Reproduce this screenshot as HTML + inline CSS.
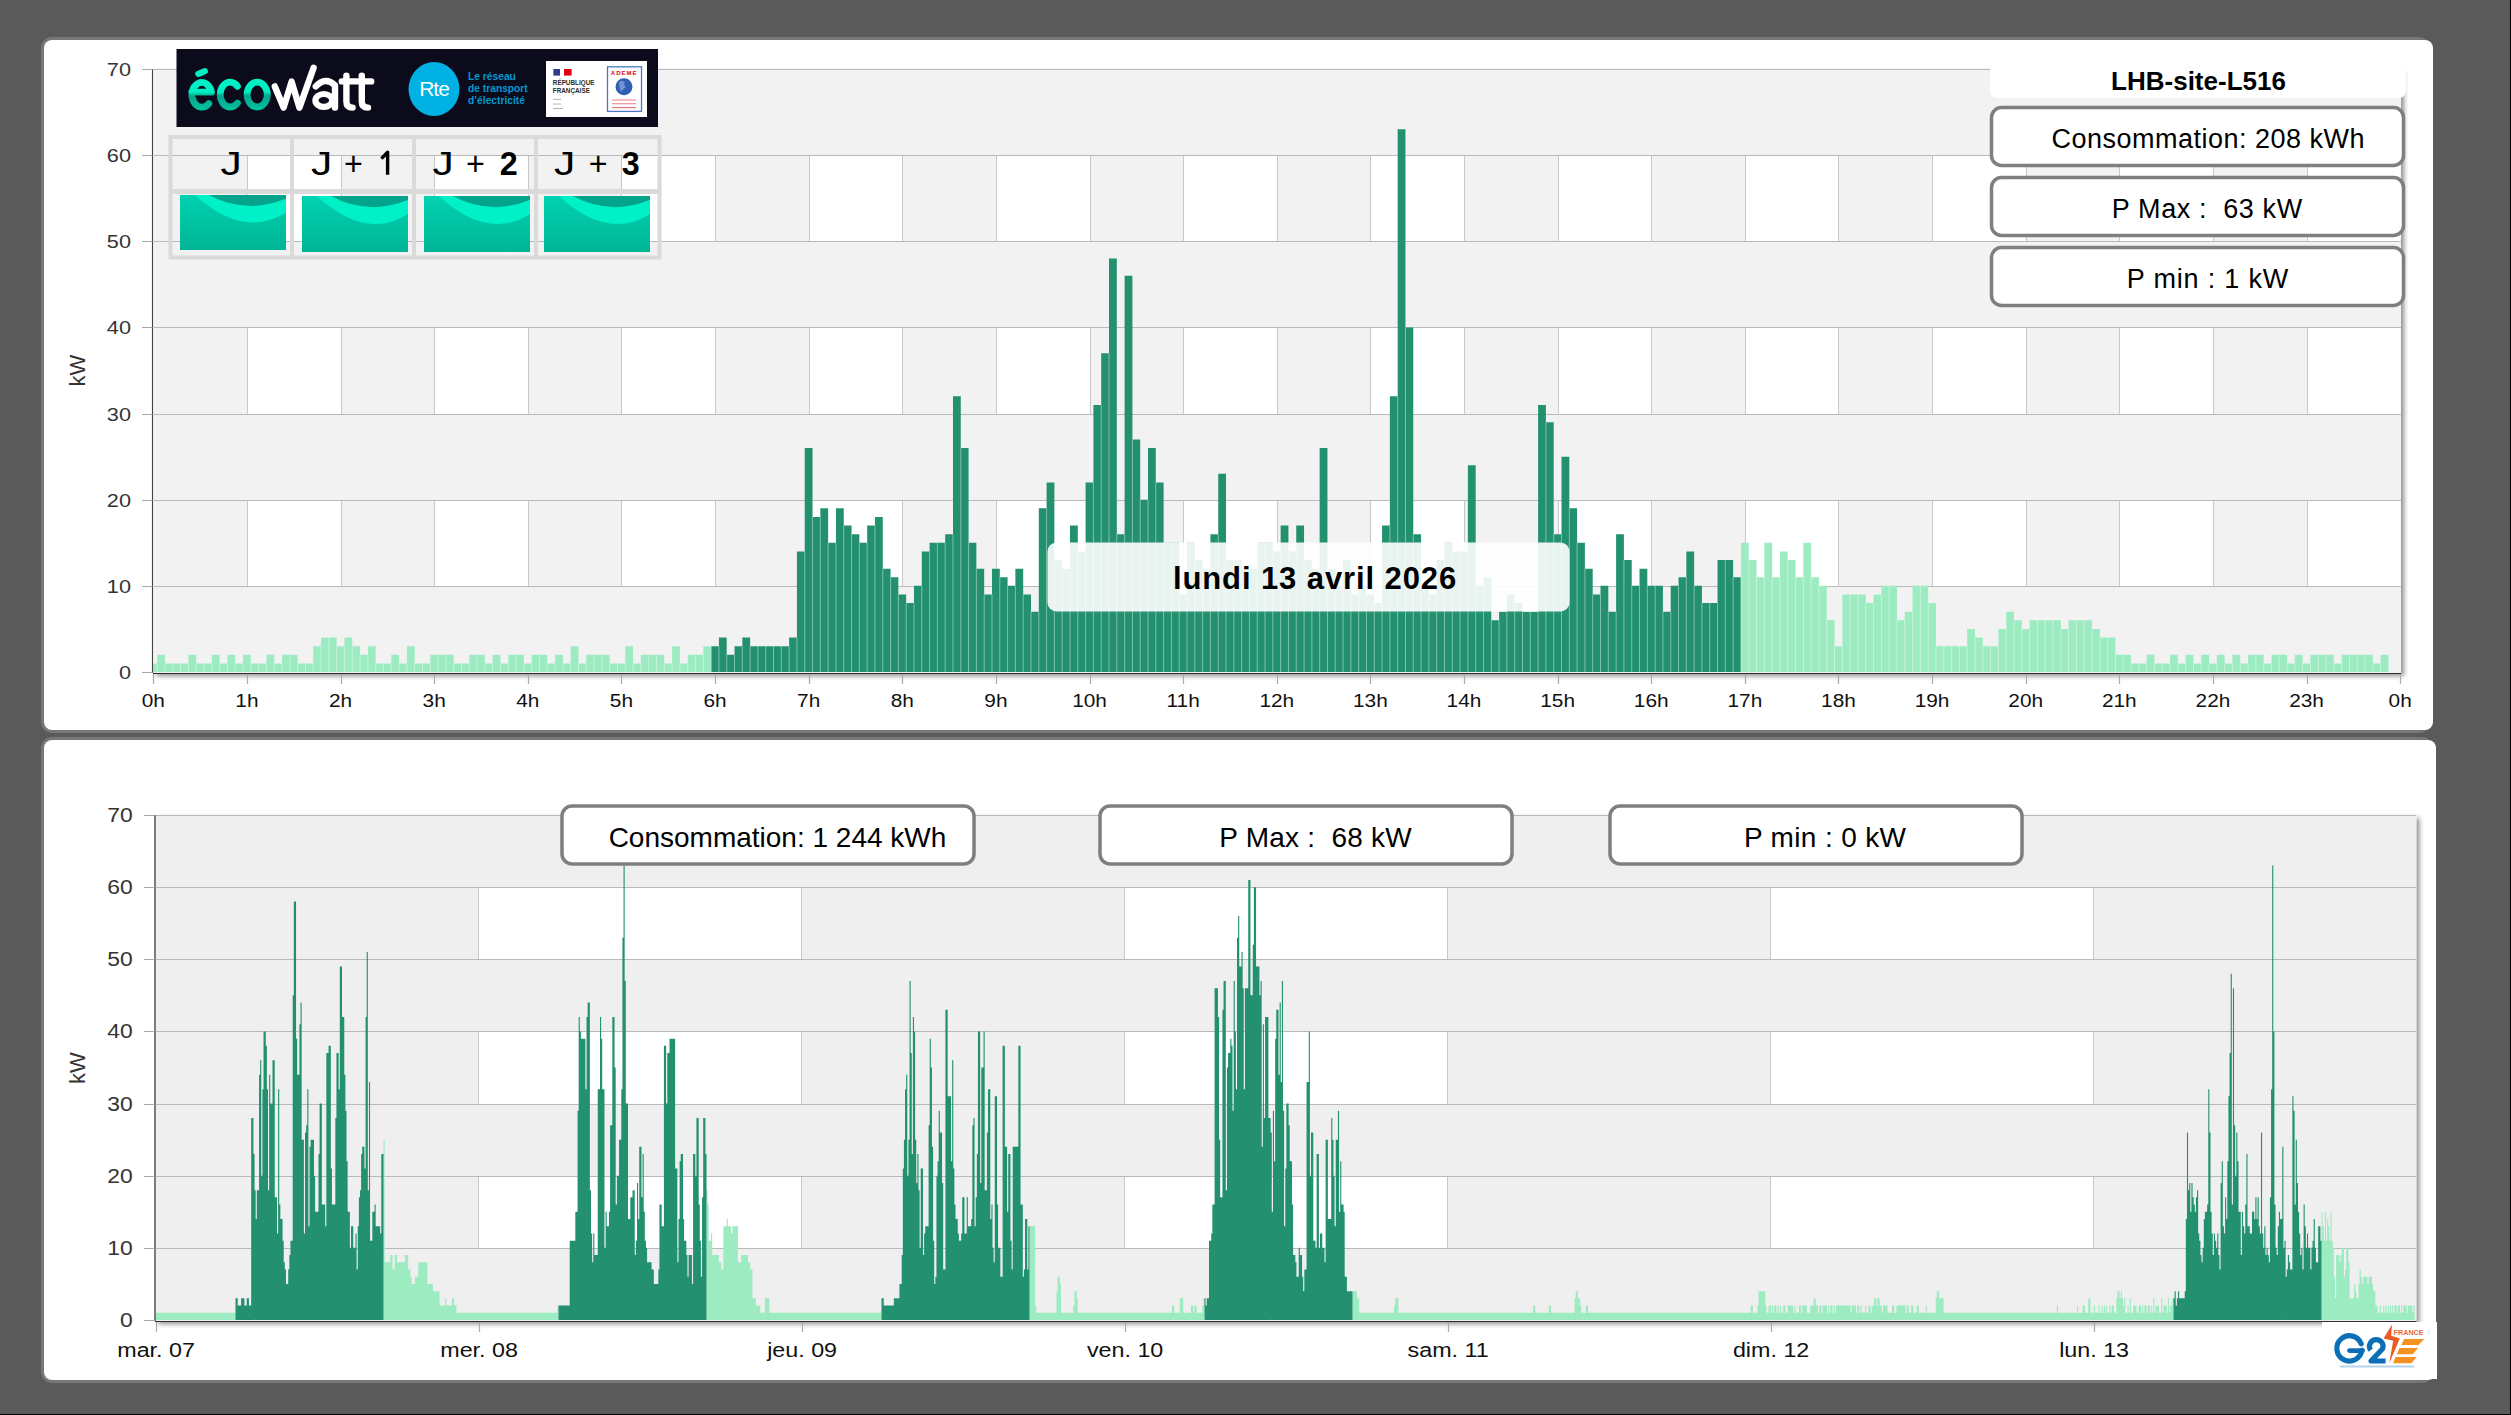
<!DOCTYPE html><html><head><meta charset="utf-8"><style>
html,body{margin:0;padding:0;background:#5a5a5a;width:2511px;height:1415px;overflow:hidden}
svg{position:absolute;left:0;top:0;display:block}
text{font-family:"Liberation Sans",sans-serif}
</style></head><body>
<svg width="2511" height="1415" viewBox="0 0 2511 1415">
<defs><filter id="psh" x="-5%" y="-5%" width="110%" height="110%"><feGaussianBlur in="SourceAlpha" stdDeviation="2.5"/><feOffset dx="3" dy="3"/><feComponentTransfer><feFuncA type="linear" slope="0.45"/></feComponentTransfer><feMerge><feMergeNode/><feMergeNode in="SourceGraphic"/></feMerge></filter><linearGradient id="tealg" x1="0" y1="0" x2="0" y2="1"><stop offset="0" stop-color="#00d2b0"/><stop offset="1" stop-color="#00b595"/></linearGradient></defs>
<rect x="2510" y="0" width="1" height="1415" fill="#000"/>
<rect x="0" y="1414" width="2511" height="1" fill="#000"/>
<rect x="42.5" y="38.5" width="2386" height="693" rx="9.5" ry="9.5" fill="none" stroke="#777" stroke-width="3"/>
<rect x="42.5" y="738.5" width="2389" height="643" rx="9.5" ry="9.5" fill="none" stroke="#777" stroke-width="3"/>
<rect x="44" y="40" width="2389" height="690" rx="8" ry="8" fill="#fff"/>
<rect x="44" y="740" width="2392" height="640" rx="8" ry="8" fill="#fff"/>
<rect x="153.3" y="69" width="2247.7" height="604" fill="#f2f2f2" filter="url(#psh)"/>
<rect x="247.5" y="155.5" width="94" height="86" fill="#fff"/>
<rect x="434.5" y="155.5" width="94" height="86" fill="#fff"/>
<rect x="621.5" y="155.5" width="94" height="86" fill="#fff"/>
<rect x="809.5" y="155.5" width="93" height="86" fill="#fff"/>
<rect x="996.5" y="155.5" width="94" height="86" fill="#fff"/>
<rect x="1183.5" y="155.5" width="94" height="86" fill="#fff"/>
<rect x="1370.5" y="155.5" width="94" height="86" fill="#fff"/>
<rect x="1558.5" y="155.5" width="93" height="86" fill="#fff"/>
<rect x="1745.5" y="155.5" width="93" height="86" fill="#fff"/>
<rect x="1932.5" y="155.5" width="94" height="86" fill="#fff"/>
<rect x="2119.5" y="155.5" width="94" height="86" fill="#fff"/>
<rect x="2307.5" y="155.5" width="93" height="86" fill="#fff"/>
<rect x="247.5" y="327.5" width="94" height="87" fill="#fff"/>
<rect x="434.5" y="327.5" width="94" height="87" fill="#fff"/>
<rect x="621.5" y="327.5" width="94" height="87" fill="#fff"/>
<rect x="809.5" y="327.5" width="93" height="87" fill="#fff"/>
<rect x="996.5" y="327.5" width="94" height="87" fill="#fff"/>
<rect x="1183.5" y="327.5" width="94" height="87" fill="#fff"/>
<rect x="1370.5" y="327.5" width="94" height="87" fill="#fff"/>
<rect x="1558.5" y="327.5" width="93" height="87" fill="#fff"/>
<rect x="1745.5" y="327.5" width="93" height="87" fill="#fff"/>
<rect x="1932.5" y="327.5" width="94" height="87" fill="#fff"/>
<rect x="2119.5" y="327.5" width="94" height="87" fill="#fff"/>
<rect x="2307.5" y="327.5" width="93" height="87" fill="#fff"/>
<rect x="247.5" y="500.5" width="94" height="86" fill="#fff"/>
<rect x="434.5" y="500.5" width="94" height="86" fill="#fff"/>
<rect x="621.5" y="500.5" width="94" height="86" fill="#fff"/>
<rect x="809.5" y="500.5" width="93" height="86" fill="#fff"/>
<rect x="996.5" y="500.5" width="94" height="86" fill="#fff"/>
<rect x="1183.5" y="500.5" width="94" height="86" fill="#fff"/>
<rect x="1370.5" y="500.5" width="94" height="86" fill="#fff"/>
<rect x="1558.5" y="500.5" width="93" height="86" fill="#fff"/>
<rect x="1745.5" y="500.5" width="93" height="86" fill="#fff"/>
<rect x="1932.5" y="500.5" width="94" height="86" fill="#fff"/>
<rect x="2119.5" y="500.5" width="94" height="86" fill="#fff"/>
<rect x="2307.5" y="500.5" width="93" height="86" fill="#fff"/>
<path d="M153.3 586.5H2401M153.3 500.5H2401M153.3 414.5H2401M153.3 327.5H2401M153.3 241.5H2401M153.3 155.5H2401M153.3 69.5H2401" stroke="#b9b9b9" stroke-width="1" fill="none"/>
<path d="M247.5 156V241M341.5 156V241M434.5 156V241M528.5 156V241M621.5 156V241M715.5 156V241M809.5 156V241M902.5 156V241M996.5 156V241M1090.5 156V241M1183.5 156V241M1277.5 156V241M1370.5 156V241M1464.5 156V241M1558.5 156V241M1651.5 156V241M1745.5 156V241M1838.5 156V241M1932.5 156V241M2026.5 156V241M2119.5 156V241M2213.5 156V241M2307.5 156V241M247.5 328V414M341.5 328V414M434.5 328V414M528.5 328V414M621.5 328V414M715.5 328V414M809.5 328V414M902.5 328V414M996.5 328V414M1090.5 328V414M1183.5 328V414M1277.5 328V414M1370.5 328V414M1464.5 328V414M1558.5 328V414M1651.5 328V414M1745.5 328V414M1838.5 328V414M1932.5 328V414M2026.5 328V414M2119.5 328V414M2213.5 328V414M2307.5 328V414M247.5 501V586M341.5 501V586M434.5 501V586M528.5 501V586M621.5 501V586M715.5 501V586M809.5 501V586M902.5 501V586M996.5 501V586M1090.5 501V586M1183.5 501V586M1277.5 501V586M1370.5 501V586M1464.5 501V586M1558.5 501V586M1651.5 501V586M1745.5 501V586M1838.5 501V586M1932.5 501V586M2026.5 501V586M2119.5 501V586M2213.5 501V586M2307.5 501V586" stroke="#c8c8c8" stroke-width="1" fill="none"/>
<path d="M153.3 663.39H157.2V672H153.3ZM157.2 654.77H165V672H157.2ZM165 663.39H172.8V672H165ZM172.8 663.39H180.61V672H172.8ZM180.61 663.39H188.41V672H180.61ZM188.41 654.77H196.21V672H188.41ZM196.21 663.39H204.01V672H196.21ZM204.01 663.39H211.81V672H204.01ZM211.81 654.77H219.61V672H211.81ZM219.61 663.39H227.42V672H219.61ZM227.42 654.77H235.22V672H227.42ZM235.22 663.39H243.02V672H235.22ZM243.02 654.77H250.82V672H243.02ZM250.82 663.39H258.62V672H250.82ZM258.62 663.39H266.42V672H258.62ZM266.42 654.77H274.23V672H266.42ZM274.23 663.39H282.03V672H274.23ZM282.03 654.77H289.83V672H282.03ZM289.83 654.77H297.63V672H289.83ZM297.63 663.39H305.43V672H297.63ZM305.43 663.39H313.23V672H305.43ZM313.23 646.16H321.04V672H313.23ZM321.04 637.54H328.84V672H321.04ZM328.84 637.54H336.64V672H328.84ZM336.64 646.16H344.44V672H336.64ZM344.44 637.54H352.24V672H344.44ZM352.24 646.16H360.04V672H352.24ZM360.04 654.77H367.85V672H360.04ZM367.85 646.16H375.65V672H367.85ZM375.65 663.39H383.45V672H375.65ZM383.45 663.39H391.25V672H383.45ZM391.25 654.77H399.05V672H391.25ZM399.05 663.39H406.85V672H399.05ZM406.85 646.16H414.66V672H406.85ZM414.66 663.39H422.46V672H414.66ZM422.46 663.39H430.26V672H422.46ZM430.26 654.77H438.06V672H430.26ZM438.06 654.77H445.86V672H438.06ZM445.86 654.77H453.66V672H445.86ZM453.66 663.39H461.47V672H453.66ZM461.47 663.39H469.27V672H461.47ZM469.27 654.77H477.07V672H469.27ZM477.07 654.77H484.87V672H477.07ZM484.87 663.39H492.67V672H484.87ZM492.67 654.77H500.47V672H492.67ZM500.47 663.39H508.28V672H500.47ZM508.28 654.77H516.08V672H508.28ZM516.08 654.77H523.88V672H516.08ZM523.88 663.39H531.68V672H523.88ZM531.68 654.77H539.48V672H531.68ZM539.48 654.77H547.28V672H539.48ZM547.28 663.39H555.09V672H547.28ZM555.09 654.77H562.89V672H555.09ZM562.89 663.39H570.69V672H562.89ZM570.69 646.16H578.49V672H570.69ZM578.49 663.39H586.29V672H578.49ZM586.29 654.77H594.09V672H586.29ZM594.09 654.77H601.9V672H594.09ZM601.9 654.77H609.7V672H601.9ZM609.7 663.39H617.5V672H609.7ZM617.5 663.39H625.3V672H617.5ZM625.3 646.16H633.1V672H625.3ZM633.1 663.39H640.9V672H633.1ZM640.9 654.77H648.71V672H640.9ZM648.71 654.77H656.51V672H648.71ZM656.51 654.77H664.31V672H656.51ZM664.31 663.39H672.11V672H664.31ZM672.11 646.16H679.91V672H672.11ZM679.91 663.39H687.71V672H679.91ZM687.71 654.77H695.52V672H687.71ZM695.52 654.77H703.32V672H695.52ZM703.32 646.16H711.12V672H703.32ZM1740.94 542.79H1748.74V672H1740.94ZM1748.74 560.01H1756.54V672H1748.74ZM1756.54 577.24H1764.34V672H1756.54ZM1764.34 542.79H1772.15V672H1764.34ZM1772.15 577.24H1779.95V672H1772.15ZM1779.95 551.4H1787.75V672H1779.95ZM1787.75 560.01H1795.55V672H1787.75ZM1795.55 577.24H1803.35V672H1795.55ZM1803.35 542.79H1811.15V672H1803.35ZM1811.15 577.24H1818.96V672H1811.15ZM1818.96 585.86H1826.76V672H1818.96ZM1826.76 620.31H1834.56V672H1826.76ZM1834.56 646.16H1842.36V672H1834.56ZM1842.36 594.47H1850.16V672H1842.36ZM1850.16 594.47H1857.96V672H1850.16ZM1857.96 594.47H1865.77V672H1857.96ZM1865.77 603.09H1873.57V672H1865.77ZM1873.57 594.47H1881.37V672H1873.57ZM1881.37 585.86H1889.17V672H1881.37ZM1889.17 585.86H1896.97V672H1889.17ZM1896.97 620.31H1904.77V672H1896.97ZM1904.77 611.7H1912.58V672H1904.77ZM1912.58 585.86H1920.38V672H1912.58ZM1920.38 585.86H1928.18V672H1920.38ZM1928.18 603.09H1935.98V672H1928.18ZM1935.98 646.16H1943.78V672H1935.98ZM1943.78 646.16H1951.58V672H1943.78ZM1951.58 646.16H1959.39V672H1951.58ZM1959.39 646.16H1967.19V672H1959.39ZM1967.19 628.93H1974.99V672H1967.19ZM1974.99 637.54H1982.79V672H1974.99ZM1982.79 646.16H1990.59V672H1982.79ZM1990.59 646.16H1998.39V672H1990.59ZM1998.39 628.93H2006.2V672H1998.39ZM2006.2 611.7H2014V672H2006.2ZM2014 620.31H2021.8V672H2014ZM2021.8 628.93H2029.6V672H2021.8ZM2029.6 620.31H2037.4V672H2029.6ZM2037.4 620.31H2045.2V672H2037.4ZM2045.2 620.31H2053.01V672H2045.2ZM2053.01 620.31H2060.81V672H2053.01ZM2060.81 628.93H2068.61V672H2060.81ZM2068.61 620.31H2076.41V672H2068.61ZM2076.41 620.31H2084.21V672H2076.41ZM2084.21 620.31H2092.01V672H2084.21ZM2092.01 628.93H2099.82V672H2092.01ZM2099.82 637.54H2107.62V672H2099.82ZM2107.62 637.54H2115.42V672H2107.62ZM2115.42 654.77H2123.22V672H2115.42ZM2123.22 654.77H2131.02V672H2123.22ZM2131.02 663.39H2138.82V672H2131.02ZM2138.82 663.39H2146.63V672H2138.82ZM2146.63 654.77H2154.43V672H2146.63ZM2154.43 663.39H2162.23V672H2154.43ZM2162.23 663.39H2170.03V672H2162.23ZM2170.03 654.77H2177.83V672H2170.03ZM2177.83 663.39H2185.63V672H2177.83ZM2185.63 654.77H2193.44V672H2185.63ZM2193.44 663.39H2201.24V672H2193.44ZM2201.24 654.77H2209.04V672H2201.24ZM2209.04 663.39H2216.84V672H2209.04ZM2216.84 654.77H2224.64V672H2216.84ZM2224.64 663.39H2232.44V672H2224.64ZM2232.44 654.77H2240.25V672H2232.44ZM2240.25 663.39H2248.05V672H2240.25ZM2248.05 654.77H2255.85V672H2248.05ZM2255.85 654.77H2263.65V672H2255.85ZM2263.65 663.39H2271.45V672H2263.65ZM2271.45 654.77H2279.25V672H2271.45ZM2279.25 654.77H2287.06V672H2279.25ZM2287.06 663.39H2294.86V672H2287.06ZM2294.86 654.77H2302.66V672H2294.86ZM2302.66 663.39H2310.46V672H2302.66ZM2310.46 654.77H2318.26V672H2310.46ZM2318.26 654.77H2326.06V672H2318.26ZM2326.06 654.77H2333.87V672H2326.06ZM2333.87 663.39H2341.67V672H2333.87ZM2341.67 654.77H2349.47V672H2341.67ZM2349.47 654.77H2357.27V672H2349.47ZM2357.27 654.77H2365.07V672H2357.27ZM2365.07 654.77H2372.87V672H2365.07ZM2372.87 663.39H2380.68V672H2372.87ZM2380.68 654.77H2388.48V672H2380.68Z" fill="#9debc1"/>
<path d="M711.12 646.16H718.92V672H711.12ZM718.92 637.54H726.72V672H718.92ZM726.72 654.77H734.52V672H726.72ZM734.52 646.16H742.33V672H734.52ZM742.33 637.54H750.13V672H742.33ZM750.13 646.16H757.93V672H750.13ZM757.93 646.16H765.73V672H757.93ZM765.73 646.16H773.53V672H765.73ZM773.53 646.16H781.33V672H773.53ZM781.33 646.16H789.14V672H781.33ZM789.14 637.54H796.94V672H789.14ZM796.94 551.4H804.74V672H796.94ZM804.74 448.03H812.54V672H804.74ZM812.54 516.94H820.34V672H812.54ZM820.34 508.33H828.14V672H820.34ZM828.14 542.79H835.95V672H828.14ZM835.95 508.33H843.75V672H835.95ZM843.75 525.56H851.55V672H843.75ZM851.55 534.17H859.35V672H851.55ZM859.35 542.79H867.15V672H859.35ZM867.15 525.56H874.95V672H867.15ZM874.95 516.94H882.76V672H874.95ZM882.76 568.63H890.56V672H882.76ZM890.56 577.24H898.36V672H890.56ZM898.36 594.47H906.16V672H898.36ZM906.16 603.09H913.96V672H906.16ZM913.96 585.86H921.76V672H913.96ZM921.76 551.4H929.57V672H921.76ZM929.57 542.79H937.37V672H929.57ZM937.37 542.79H945.17V672H937.37ZM945.17 534.17H952.97V672H945.17ZM952.97 396.34H960.77V672H952.97ZM960.77 448.03H968.57V672H960.77ZM968.57 542.79H976.38V672H968.57ZM976.38 568.63H984.18V672H976.38ZM984.18 594.47H991.98V672H984.18ZM991.98 568.63H999.78V672H991.98ZM999.78 577.24H1007.58V672H999.78ZM1007.58 585.86H1015.38V672H1007.58ZM1015.38 568.63H1023.19V672H1015.38ZM1023.19 594.47H1030.99V672H1023.19ZM1030.99 611.7H1038.79V672H1030.99ZM1038.79 508.33H1046.59V672H1038.79ZM1046.59 482.49H1054.39V672H1046.59ZM1054.39 560.01H1062.19V672H1054.39ZM1062.19 568.63H1070V672H1062.19ZM1070 525.56H1077.8V672H1070ZM1077.8 551.4H1085.6V672H1077.8ZM1085.6 482.49H1093.4V672H1085.6ZM1093.4 404.96H1101.2V672H1093.4ZM1101.2 353.27H1109V672H1101.2ZM1109 258.51H1116.81V672H1109ZM1116.81 534.17H1124.61V672H1116.81ZM1124.61 275.74H1132.41V672H1124.61ZM1132.41 439.41H1140.21V672H1132.41ZM1140.21 499.71H1148.01V672H1140.21ZM1148.01 448.03H1155.81V672H1148.01ZM1155.81 482.49H1163.62V672H1155.81ZM1163.62 542.79H1171.42V672H1163.62ZM1171.42 542.79H1179.22V672H1171.42ZM1179.22 594.47H1187.02V672H1179.22ZM1187.02 542.79H1194.82V672H1187.02ZM1194.82 560.01H1202.62V672H1194.82ZM1202.62 568.63H1210.43V672H1202.62ZM1210.43 534.17H1218.23V672H1210.43ZM1218.23 473.87H1226.03V672H1218.23ZM1226.03 560.01H1233.83V672H1226.03ZM1233.83 560.01H1241.63V672H1233.83ZM1241.63 568.63H1249.43V672H1241.63ZM1249.43 568.63H1257.24V672H1249.43ZM1257.24 542.79H1265.04V672H1257.24ZM1265.04 542.79H1272.84V672H1265.04ZM1272.84 551.4H1280.64V672H1272.84ZM1280.64 525.56H1288.44V672H1280.64ZM1288.44 551.4H1296.24V672H1288.44ZM1296.24 525.56H1304.05V672H1296.24ZM1304.05 560.01H1311.85V672H1304.05ZM1311.85 568.63H1319.65V672H1311.85ZM1319.65 448.03H1327.45V672H1319.65ZM1327.45 568.63H1335.25V672H1327.45ZM1335.25 585.86H1343.05V672H1335.25ZM1343.05 560.01H1350.86V672H1343.05ZM1350.86 594.47H1358.66V672H1350.86ZM1358.66 585.86H1366.46V672H1358.66ZM1366.46 594.47H1374.26V672H1366.46ZM1374.26 603.09H1382.06V672H1374.26ZM1382.06 525.56H1389.86V672H1382.06ZM1389.86 396.34H1397.67V672H1389.86ZM1397.67 129.3H1405.47V672H1397.67ZM1405.47 327.43H1413.27V672H1405.47ZM1413.27 534.17H1421.07V672H1413.27ZM1421.07 585.86H1428.87V672H1421.07ZM1428.87 594.47H1436.67V672H1428.87ZM1436.67 560.01H1444.48V672H1436.67ZM1444.48 542.79H1452.28V672H1444.48ZM1452.28 551.4H1460.08V672H1452.28ZM1460.08 551.4H1467.88V672H1460.08ZM1467.88 465.26H1475.68V672H1467.88ZM1475.68 585.86H1483.48V672H1475.68ZM1483.48 577.24H1491.29V672H1483.48ZM1491.29 620.31H1499.09V672H1491.29ZM1499.09 611.7H1506.89V672H1499.09ZM1506.89 594.47H1514.69V672H1506.89ZM1514.69 603.09H1522.49V672H1514.69ZM1522.49 611.7H1530.29V672H1522.49ZM1530.29 611.7H1538.1V672H1530.29ZM1538.1 404.96H1545.9V672H1538.1ZM1545.9 422.19H1553.7V672H1545.9ZM1553.7 534.17H1561.5V672H1553.7ZM1561.5 456.64H1569.3V672H1561.5ZM1569.3 508.33H1577.1V672H1569.3ZM1577.1 542.79H1584.91V672H1577.1ZM1584.91 568.63H1592.71V672H1584.91ZM1592.71 594.47H1600.51V672H1592.71ZM1600.51 585.86H1608.31V672H1600.51ZM1608.31 611.7H1616.11V672H1608.31ZM1616.11 534.17H1623.91V672H1616.11ZM1623.91 560.01H1631.72V672H1623.91ZM1631.72 585.86H1639.52V672H1631.72ZM1639.52 568.63H1647.32V672H1639.52ZM1647.32 585.86H1655.12V672H1647.32ZM1655.12 585.86H1662.92V672H1655.12ZM1662.92 611.7H1670.72V672H1662.92ZM1670.72 585.86H1678.53V672H1670.72ZM1678.53 577.24H1686.33V672H1678.53ZM1686.33 551.4H1694.13V672H1686.33ZM1694.13 585.86H1701.93V672H1694.13ZM1701.93 603.09H1709.73V672H1701.93ZM1709.73 603.09H1717.53V672H1709.73ZM1717.53 560.01H1725.34V672H1717.53ZM1725.34 560.01H1733.14V672H1725.34ZM1733.14 577.24H1740.94V672H1733.14Z" fill="#23916f"/>
<path d="M157.2 663.39V672M165 663.39V672M172.8 663.39V672M180.61 663.39V672M188.41 663.39V672M196.21 663.39V672M204.01 663.39V672M211.81 663.39V672M219.61 663.39V672M227.42 663.39V672M235.22 663.39V672M243.02 663.39V672M250.82 663.39V672M258.62 663.39V672M266.42 663.39V672M274.23 663.39V672M282.03 663.39V672M289.83 654.77V672M297.63 663.39V672M305.43 663.39V672M313.23 663.39V672M321.04 646.16V672M328.84 637.54V672M336.64 646.16V672M344.44 646.16V672M352.24 646.16V672M360.04 654.77V672M367.85 654.77V672M375.65 663.39V672M383.45 663.39V672M391.25 663.39V672M399.05 663.39V672M406.85 663.39V672M414.66 663.39V672M422.46 663.39V672M430.26 663.39V672M438.06 654.77V672M445.86 654.77V672M453.66 663.39V672M461.47 663.39V672M469.27 663.39V672M477.07 654.77V672M484.87 663.39V672M492.67 663.39V672M500.47 663.39V672M508.28 663.39V672M516.08 654.77V672M523.88 663.39V672M531.68 663.39V672M539.48 654.77V672M547.28 663.39V672M555.09 663.39V672M562.89 663.39V672M570.69 663.39V672M578.49 663.39V672M586.29 663.39V672M594.09 654.77V672M601.9 654.77V672M609.7 663.39V672M617.5 663.39V672M625.3 663.39V672M633.1 663.39V672M640.9 663.39V672M648.71 654.77V672M656.51 654.77V672M664.31 663.39V672M672.11 663.39V672M679.91 663.39V672M687.71 663.39V672M695.52 654.77V672M703.32 654.77V672M711.12 646.16V672M718.92 646.16V672M726.72 654.77V672M734.52 654.77V672M742.33 646.16V672M750.13 646.16V672M757.93 646.16V672M765.73 646.16V672M773.53 646.16V672M781.33 646.16V672M789.14 646.16V672M796.94 637.54V672M804.74 551.4V672M812.54 516.94V672M820.34 516.94V672M828.14 542.79V672M835.95 542.79V672M843.75 525.56V672M851.55 534.17V672M859.35 542.79V672M867.15 542.79V672M874.95 525.56V672M882.76 568.63V672M890.56 577.24V672M898.36 594.47V672M906.16 603.09V672M913.96 603.09V672M921.76 585.86V672M929.57 551.4V672M937.37 542.79V672M945.17 542.79V672M952.97 534.17V672M960.77 448.03V672M968.57 542.79V672M976.38 568.63V672M984.18 594.47V672M991.98 594.47V672M999.78 577.24V672M1007.58 585.86V672M1015.38 585.86V672M1023.19 594.47V672M1030.99 611.7V672M1038.79 611.7V672M1046.59 508.33V672M1054.39 560.01V672M1062.19 568.63V672M1070 568.63V672M1077.8 551.4V672M1085.6 551.4V672M1093.4 482.49V672M1101.2 404.96V672M1109 353.27V672M1116.81 534.17V672M1124.61 534.17V672M1132.41 439.41V672M1140.21 499.71V672M1148.01 499.71V672M1155.81 482.49V672M1163.62 542.79V672M1171.42 542.79V672M1179.22 594.47V672M1187.02 594.47V672M1194.82 560.01V672M1202.62 568.63V672M1210.43 568.63V672M1218.23 534.17V672M1226.03 560.01V672M1233.83 560.01V672M1241.63 568.63V672M1249.43 568.63V672M1257.24 568.63V672M1265.04 542.79V672M1272.84 551.4V672M1280.64 551.4V672M1288.44 551.4V672M1296.24 551.4V672M1304.05 560.01V672M1311.85 568.63V672M1319.65 568.63V672M1327.45 568.63V672M1335.25 585.86V672M1343.05 585.86V672M1350.86 594.47V672M1358.66 594.47V672M1366.46 594.47V672M1374.26 603.09V672M1382.06 603.09V672M1389.86 525.56V672M1397.67 396.34V672M1405.47 327.43V672M1413.27 534.17V672M1421.07 585.86V672M1428.87 594.47V672M1436.67 594.47V672M1444.48 560.01V672M1452.28 551.4V672M1460.08 551.4V672M1467.88 551.4V672M1475.68 585.86V672M1483.48 585.86V672M1491.29 620.31V672M1499.09 620.31V672M1506.89 611.7V672M1514.69 603.09V672M1522.49 611.7V672M1530.29 611.7V672M1538.1 611.7V672M1545.9 422.19V672M1553.7 534.17V672M1561.5 534.17V672M1569.3 508.33V672M1577.1 542.79V672M1584.91 568.63V672M1592.71 594.47V672M1600.51 594.47V672M1608.31 611.7V672M1616.11 611.7V672M1623.91 560.01V672M1631.72 585.86V672M1639.52 585.86V672M1647.32 585.86V672M1655.12 585.86V672M1662.92 611.7V672M1670.72 611.7V672M1678.53 585.86V672M1686.33 577.24V672M1694.13 585.86V672M1701.93 603.09V672M1709.73 603.09V672M1717.53 603.09V672M1725.34 560.01V672M1733.14 577.24V672M1740.94 577.24V672M1748.74 560.01V672M1756.54 577.24V672M1764.34 577.24V672M1772.15 577.24V672M1779.95 577.24V672M1787.75 560.01V672M1795.55 577.24V672M1803.35 577.24V672M1811.15 577.24V672M1818.96 585.86V672M1826.76 620.31V672M1834.56 646.16V672M1842.36 646.16V672M1850.16 594.47V672M1857.96 594.47V672M1865.77 603.09V672M1873.57 603.09V672M1881.37 594.47V672M1889.17 585.86V672M1896.97 620.31V672M1904.77 620.31V672M1912.58 611.7V672M1920.38 585.86V672M1928.18 603.09V672M1935.98 646.16V672M1943.78 646.16V672M1951.58 646.16V672M1959.39 646.16V672M1967.19 646.16V672M1974.99 637.54V672M1982.79 646.16V672M1990.59 646.16V672M1998.39 646.16V672M2006.2 628.93V672M2014 620.31V672M2021.8 628.93V672M2029.6 628.93V672M2037.4 620.31V672M2045.2 620.31V672M2053.01 620.31V672M2060.81 628.93V672M2068.61 628.93V672M2076.41 620.31V672M2084.21 620.31V672M2092.01 628.93V672M2099.82 637.54V672M2107.62 637.54V672M2115.42 654.77V672M2123.22 654.77V672M2131.02 663.39V672M2138.82 663.39V672M2146.63 663.39V672M2154.43 663.39V672M2162.23 663.39V672M2170.03 663.39V672M2177.83 663.39V672M2185.63 663.39V672M2193.44 663.39V672M2201.24 663.39V672M2209.04 663.39V672M2216.84 663.39V672M2224.64 663.39V672M2232.44 663.39V672M2240.25 663.39V672M2248.05 663.39V672M2255.85 654.77V672M2263.65 663.39V672M2271.45 663.39V672M2279.25 654.77V672M2287.06 663.39V672M2294.86 663.39V672M2302.66 663.39V672M2310.46 663.39V672M2318.26 654.77V672M2326.06 654.77V672M2333.87 663.39V672M2341.67 663.39V672M2349.47 654.77V672M2357.27 654.77V672M2365.07 654.77V672M2372.87 663.39V672M2380.68 663.39V672" stroke="#fff" stroke-opacity="0.42" stroke-width="1" fill="none"/>
<path d="M152.5 69V673" stroke="#444" stroke-width="1.1" fill="none"/>
<path d="M153 673.5H2401" stroke="#2e2e2e" stroke-width="1.2" fill="none"/>
<text transform="translate(131 678.8) scale(1.24 1)" font-size="17.5" fill="#333" text-anchor="end">0</text>
<text transform="translate(131 592.8) scale(1.24 1)" font-size="17.5" fill="#333" text-anchor="end">10</text>
<text transform="translate(131 506.8) scale(1.24 1)" font-size="17.5" fill="#333" text-anchor="end">20</text>
<text transform="translate(131 420.8) scale(1.24 1)" font-size="17.5" fill="#333" text-anchor="end">30</text>
<text transform="translate(131 333.8) scale(1.24 1)" font-size="17.5" fill="#333" text-anchor="end">40</text>
<text transform="translate(131 247.8) scale(1.24 1)" font-size="17.5" fill="#333" text-anchor="end">50</text>
<text transform="translate(131 161.8) scale(1.24 1)" font-size="17.5" fill="#333" text-anchor="end">60</text>
<text transform="translate(131 75.8) scale(1.24 1)" font-size="17.5" fill="#333" text-anchor="end">70</text>
<path d="M142 672.5H152.5M142 586.5H152.5M142 500.5H152.5M142 414.5H152.5M142 327.5H152.5M142 241.5H152.5M142 155.5H152.5M142 69.5H152.5" stroke="#a8a8a8" stroke-width="1" fill="none"/>
<text transform="translate(153.3 707) scale(1.19 1)" font-size="17.5" fill="#111" text-anchor="middle">0h</text>
<text transform="translate(246.92 707) scale(1.19 1)" font-size="17.5" fill="#111" text-anchor="middle">1h</text>
<text transform="translate(340.54 707) scale(1.19 1)" font-size="17.5" fill="#111" text-anchor="middle">2h</text>
<text transform="translate(434.16 707) scale(1.19 1)" font-size="17.5" fill="#111" text-anchor="middle">3h</text>
<text transform="translate(527.78 707) scale(1.19 1)" font-size="17.5" fill="#111" text-anchor="middle">4h</text>
<text transform="translate(621.4 707) scale(1.19 1)" font-size="17.5" fill="#111" text-anchor="middle">5h</text>
<text transform="translate(715.02 707) scale(1.19 1)" font-size="17.5" fill="#111" text-anchor="middle">6h</text>
<text transform="translate(808.64 707) scale(1.19 1)" font-size="17.5" fill="#111" text-anchor="middle">7h</text>
<text transform="translate(902.26 707) scale(1.19 1)" font-size="17.5" fill="#111" text-anchor="middle">8h</text>
<text transform="translate(995.88 707) scale(1.19 1)" font-size="17.5" fill="#111" text-anchor="middle">9h</text>
<text transform="translate(1089.5 707) scale(1.19 1)" font-size="17.5" fill="#111" text-anchor="middle">10h</text>
<text transform="translate(1183.12 707) scale(1.19 1)" font-size="17.5" fill="#111" text-anchor="middle">11h</text>
<text transform="translate(1276.74 707) scale(1.19 1)" font-size="17.5" fill="#111" text-anchor="middle">12h</text>
<text transform="translate(1370.36 707) scale(1.19 1)" font-size="17.5" fill="#111" text-anchor="middle">13h</text>
<text transform="translate(1463.98 707) scale(1.19 1)" font-size="17.5" fill="#111" text-anchor="middle">14h</text>
<text transform="translate(1557.6 707) scale(1.19 1)" font-size="17.5" fill="#111" text-anchor="middle">15h</text>
<text transform="translate(1651.22 707) scale(1.19 1)" font-size="17.5" fill="#111" text-anchor="middle">16h</text>
<text transform="translate(1744.84 707) scale(1.19 1)" font-size="17.5" fill="#111" text-anchor="middle">17h</text>
<text transform="translate(1838.46 707) scale(1.19 1)" font-size="17.5" fill="#111" text-anchor="middle">18h</text>
<text transform="translate(1932.08 707) scale(1.19 1)" font-size="17.5" fill="#111" text-anchor="middle">19h</text>
<text transform="translate(2025.7 707) scale(1.19 1)" font-size="17.5" fill="#111" text-anchor="middle">20h</text>
<text transform="translate(2119.32 707) scale(1.19 1)" font-size="17.5" fill="#111" text-anchor="middle">21h</text>
<text transform="translate(2212.94 707) scale(1.19 1)" font-size="17.5" fill="#111" text-anchor="middle">22h</text>
<text transform="translate(2306.56 707) scale(1.19 1)" font-size="17.5" fill="#111" text-anchor="middle">23h</text>
<text transform="translate(2400.18 707) scale(1.19 1)" font-size="17.5" fill="#111" text-anchor="middle">0h</text>
<path d="M153.5 674V684M247.5 674V684M341.5 674V684M434.5 674V684M528.5 674V684M621.5 674V684M715.5 674V684M809.5 674V684M902.5 674V684M996.5 674V684M1090.5 674V684M1183.5 674V684M1277.5 674V684M1370.5 674V684M1464.5 674V684M1558.5 674V684M1651.5 674V684M1745.5 674V684M1838.5 674V684M1932.5 674V684M2026.5 674V684M2119.5 674V684M2213.5 674V684M2307.5 674V684M2400.5 674V684" stroke="#aaa" stroke-width="1.2" fill="none"/>
<text transform="translate(85 370.5) rotate(-90)" font-size="22" fill="#333" text-anchor="middle">kW</text>
<rect x="1047.5" y="542.5" width="522" height="69" rx="9" ry="9" fill="#fff" fill-opacity="0.9"/>
<text x="1315" y="589" font-size="31" font-weight="bold" fill="#000" text-anchor="middle" letter-spacing="0.9">lundi 13 avril 2026</text>
<rect x="155.3" y="815" width="2261" height="506" fill="#efefef" filter="url(#psh)"/>
<rect x="478.5" y="887.5" width="323" height="72" fill="#fff"/>
<rect x="1124.5" y="887.5" width="323" height="72" fill="#fff"/>
<rect x="1770.5" y="887.5" width="323" height="72" fill="#fff"/>
<rect x="478.5" y="1031.5" width="323" height="73" fill="#fff"/>
<rect x="1124.5" y="1031.5" width="323" height="73" fill="#fff"/>
<rect x="1770.5" y="1031.5" width="323" height="73" fill="#fff"/>
<rect x="478.5" y="1176.5" width="323" height="72" fill="#fff"/>
<rect x="1124.5" y="1176.5" width="323" height="72" fill="#fff"/>
<rect x="1770.5" y="1176.5" width="323" height="72" fill="#fff"/>
<path d="M155.3 1248.5H2416.3M155.3 1176.5H2416.3M155.3 1104.5H2416.3M155.3 1031.5H2416.3M155.3 959.5H2416.3M155.3 887.5H2416.3M155.3 815.5H2416.3" stroke="#b9b9b9" stroke-width="1" fill="none"/>
<path d="M478.5 888V959M801.5 888V959M1124.5 888V959M1447.5 888V959M1770.5 888V959M2093.5 888V959M478.5 1032V1104M801.5 1032V1104M1124.5 1032V1104M1447.5 1032V1104M1770.5 1032V1104M2093.5 1032V1104M478.5 1177V1248M801.5 1177V1248M1124.5 1177V1248M1447.5 1177V1248M1770.5 1177V1248M2093.5 1177V1248" stroke="#c8c8c8" stroke-width="1" fill="none"/>
<path d="M155.3 1312.79H155.86V1320H155.3ZM155.86 1312.79H156.98V1320H155.86ZM156.98 1312.79H158.1V1320H156.98ZM158.1 1312.79H159.23V1320H158.1ZM159.23 1312.79H160.35V1320H159.23ZM160.35 1312.79H161.47V1320H160.35ZM161.47 1312.79H162.59V1320H161.47ZM162.59 1312.79H163.71V1320H162.59ZM163.71 1312.79H164.83V1320H163.71ZM164.83 1312.79H165.95V1320H164.83ZM165.95 1312.79H167.08V1320H165.95ZM167.08 1312.79H168.2V1320H167.08ZM168.2 1312.79H169.32V1320H168.2ZM169.32 1312.79H170.44V1320H169.32ZM170.44 1312.79H171.56V1320H170.44ZM171.56 1312.79H172.68V1320H171.56ZM172.68 1312.79H173.81V1320H172.68ZM173.81 1312.79H174.93V1320H173.81ZM174.93 1312.79H176.05V1320H174.93ZM176.05 1312.79H177.17V1320H176.05ZM177.17 1312.79H178.29V1320H177.17ZM178.29 1312.79H179.41V1320H178.29ZM179.41 1312.79H180.53V1320H179.41ZM180.53 1312.79H181.66V1320H180.53ZM181.66 1312.79H182.78V1320H181.66ZM182.78 1312.79H183.9V1320H182.78ZM183.9 1312.79H185.02V1320H183.9ZM185.02 1312.79H186.14V1320H185.02ZM186.14 1312.79H187.26V1320H186.14ZM187.26 1312.79H188.39V1320H187.26ZM188.39 1312.79H189.51V1320H188.39ZM189.51 1312.79H190.63V1320H189.51ZM190.63 1312.79H191.75V1320H190.63ZM191.75 1312.79H192.87V1320H191.75ZM192.87 1312.79H193.99V1320H192.87ZM193.99 1312.79H195.11V1320H193.99ZM195.11 1312.79H196.24V1320H195.11ZM196.24 1312.79H197.36V1320H196.24ZM197.36 1312.79H198.48V1320H197.36ZM198.48 1312.79H199.6V1320H198.48ZM199.6 1312.79H200.72V1320H199.6ZM200.72 1312.79H201.84V1320H200.72ZM201.84 1312.79H202.96V1320H201.84ZM202.96 1312.79H204.09V1320H202.96ZM204.09 1312.79H205.21V1320H204.09ZM205.21 1312.79H206.33V1320H205.21ZM206.33 1312.79H207.45V1320H206.33ZM207.45 1312.79H208.57V1320H207.45ZM208.57 1312.79H209.69V1320H208.57ZM209.69 1312.79H210.82V1320H209.69ZM210.82 1312.79H211.94V1320H210.82ZM211.94 1312.79H213.06V1320H211.94ZM213.06 1312.79H214.18V1320H213.06ZM214.18 1312.79H215.3V1320H214.18ZM215.3 1312.79H216.42V1320H215.3ZM216.42 1312.79H217.54V1320H216.42ZM217.54 1312.79H218.67V1320H217.54ZM218.67 1312.79H219.79V1320H218.67ZM219.79 1312.79H220.91V1320H219.79ZM220.91 1312.79H222.03V1320H220.91ZM222.03 1312.79H223.15V1320H222.03ZM223.15 1312.79H224.27V1320H223.15ZM224.27 1312.79H225.4V1320H224.27ZM225.4 1312.79H226.52V1320H225.4ZM226.52 1312.79H227.64V1320H226.52ZM227.64 1312.79H228.76V1320H227.64ZM228.76 1312.79H229.88V1320H228.76ZM229.88 1312.79H231V1320H229.88ZM231 1312.79H232.12V1320H231ZM232.12 1312.79H233.25V1320H232.12ZM233.25 1312.79H234.37V1320H233.25ZM234.37 1312.79H235.49V1320H234.37ZM383.53 1139.64H384.65V1320H383.53ZM384.65 1262.29H385.77V1320H384.65ZM385.77 1262.29H386.9V1320H385.77ZM386.9 1262.29H388.02V1320H386.9ZM388.02 1262.29H389.14V1320H388.02ZM389.14 1262.29H390.26V1320H389.14ZM390.26 1255.07H391.38V1320H390.26ZM391.38 1255.07H392.5V1320H391.38ZM392.5 1269.5H393.62V1320H392.5ZM393.62 1269.5H394.75V1320H393.62ZM394.75 1255.07H395.87V1320H394.75ZM395.87 1255.07H396.99V1320H395.87ZM396.99 1262.29H398.11V1320H396.99ZM398.11 1262.29H399.23V1320H398.11ZM399.23 1262.29H400.35V1320H399.23ZM400.35 1262.29H401.48V1320H400.35ZM401.48 1262.29H402.6V1320H401.48ZM402.6 1262.29H403.72V1320H402.6ZM403.72 1262.29H404.84V1320H403.72ZM404.84 1255.07H405.96V1320H404.84ZM405.96 1255.07H407.08V1320H405.96ZM407.08 1255.07H408.2V1320H407.08ZM408.2 1269.5H409.33V1320H408.2ZM409.33 1269.5H410.45V1320H409.33ZM410.45 1276.71H411.57V1320H410.45ZM411.57 1283.93H412.69V1320H411.57ZM412.69 1283.93H413.81V1320H412.69ZM413.81 1283.93H414.93V1320H413.81ZM414.93 1276.71H416.06V1320H414.93ZM416.06 1276.71H417.18V1320H416.06ZM417.18 1276.71H418.3V1320H417.18ZM418.3 1262.29H419.42V1320H418.3ZM419.42 1262.29H420.54V1320H419.42ZM420.54 1262.29H421.66V1320H420.54ZM421.66 1262.29H422.78V1320H421.66ZM422.78 1262.29H423.91V1320H422.78ZM423.91 1262.29H425.03V1320H423.91ZM425.03 1262.29H426.15V1320H425.03ZM426.15 1262.29H427.27V1320H426.15ZM427.27 1283.93H428.39V1320H427.27ZM428.39 1283.93H429.51V1320H428.39ZM429.51 1283.93H430.64V1320H429.51ZM430.64 1283.93H431.76V1320H430.64ZM431.76 1283.93H432.88V1320H431.76ZM432.88 1291.14H434V1320H432.88ZM434 1291.14H435.12V1320H434ZM435.12 1291.14H436.24V1320H435.12ZM436.24 1291.14H437.36V1320H436.24ZM437.36 1291.14H438.49V1320H437.36ZM438.49 1291.14H439.61V1320H438.49ZM439.61 1305.57H440.73V1320H439.61ZM440.73 1305.57H441.85V1320H440.73ZM441.85 1305.57H442.97V1320H441.85ZM442.97 1305.57H444.09V1320H442.97ZM444.09 1305.57H445.21V1320H444.09ZM445.21 1298.36H446.34V1320H445.21ZM446.34 1305.57H447.46V1320H446.34ZM447.46 1305.57H448.58V1320H447.46ZM448.58 1305.57H449.7V1320H448.58ZM449.7 1305.57H450.82V1320H449.7ZM450.82 1305.57H451.94V1320H450.82ZM451.94 1298.36H453.07V1320H451.94ZM453.07 1298.36H454.19V1320H453.07ZM454.19 1305.57H455.31V1320H454.19ZM455.31 1305.57H456.43V1320H455.31ZM456.43 1312.79H457.55V1320H456.43ZM457.55 1312.79H458.67V1320H457.55ZM458.67 1312.79H459.79V1320H458.67ZM459.79 1312.79H460.92V1320H459.79ZM460.92 1312.79H462.04V1320H460.92ZM462.04 1312.79H463.16V1320H462.04ZM463.16 1312.79H464.28V1320H463.16ZM464.28 1312.79H465.4V1320H464.28ZM465.4 1312.79H466.52V1320H465.4ZM466.52 1312.79H467.65V1320H466.52ZM467.65 1312.79H468.77V1320H467.65ZM468.77 1312.79H469.89V1320H468.77ZM469.89 1312.79H471.01V1320H469.89ZM471.01 1312.79H472.13V1320H471.01ZM472.13 1312.79H473.25V1320H472.13ZM473.25 1312.79H474.37V1320H473.25ZM474.37 1312.79H475.5V1320H474.37ZM475.5 1312.79H476.62V1320H475.5ZM476.62 1312.79H477.74V1320H476.62ZM477.74 1312.79H478.86V1320H477.74ZM478.86 1312.79H479.98V1320H478.86ZM479.98 1312.79H481.1V1320H479.98ZM481.1 1312.79H482.23V1320H481.1ZM482.23 1312.79H483.35V1320H482.23ZM483.35 1312.79H484.47V1320H483.35ZM484.47 1312.79H485.59V1320H484.47ZM485.59 1312.79H486.71V1320H485.59ZM486.71 1312.79H487.83V1320H486.71ZM487.83 1312.79H488.95V1320H487.83ZM488.95 1312.79H490.08V1320H488.95ZM490.08 1312.79H491.2V1320H490.08ZM491.2 1312.79H492.32V1320H491.2ZM492.32 1312.79H493.44V1320H492.32ZM493.44 1312.79H494.56V1320H493.44ZM494.56 1312.79H495.68V1320H494.56ZM495.68 1312.79H496.81V1320H495.68ZM496.81 1312.79H497.93V1320H496.81ZM497.93 1312.79H499.05V1320H497.93ZM499.05 1312.79H500.17V1320H499.05ZM500.17 1312.79H501.29V1320H500.17ZM501.29 1312.79H502.41V1320H501.29ZM502.41 1312.79H503.53V1320H502.41ZM503.53 1312.79H504.66V1320H503.53ZM504.66 1312.79H505.78V1320H504.66ZM505.78 1312.79H506.9V1320H505.78ZM506.9 1312.79H508.02V1320H506.9ZM508.02 1312.79H509.14V1320H508.02ZM509.14 1312.79H510.26V1320H509.14ZM510.26 1312.79H511.39V1320H510.26ZM511.39 1312.79H512.51V1320H511.39ZM512.51 1312.79H513.63V1320H512.51ZM513.63 1312.79H514.75V1320H513.63ZM514.75 1312.79H515.87V1320H514.75ZM515.87 1312.79H516.99V1320H515.87ZM516.99 1312.79H518.11V1320H516.99ZM518.11 1312.79H519.24V1320H518.11ZM519.24 1312.79H520.36V1320H519.24ZM520.36 1312.79H521.48V1320H520.36ZM521.48 1312.79H522.6V1320H521.48ZM522.6 1312.79H523.72V1320H522.6ZM523.72 1312.79H524.84V1320H523.72ZM524.84 1312.79H525.96V1320H524.84ZM525.96 1312.79H527.09V1320H525.96ZM527.09 1312.79H528.21V1320H527.09ZM528.21 1312.79H529.33V1320H528.21ZM529.33 1312.79H530.45V1320H529.33ZM530.45 1312.79H531.57V1320H530.45ZM531.57 1312.79H532.69V1320H531.57ZM532.69 1312.79H533.82V1320H532.69ZM533.82 1312.79H534.94V1320H533.82ZM534.94 1312.79H536.06V1320H534.94ZM536.06 1312.79H537.18V1320H536.06ZM537.18 1312.79H538.3V1320H537.18ZM538.3 1312.79H539.42V1320H538.3ZM539.42 1312.79H540.54V1320H539.42ZM540.54 1312.79H541.67V1320H540.54ZM541.67 1312.79H542.79V1320H541.67ZM542.79 1312.79H543.91V1320H542.79ZM543.91 1312.79H545.03V1320H543.91ZM545.03 1312.79H546.15V1320H545.03ZM546.15 1312.79H547.27V1320H546.15ZM547.27 1312.79H548.4V1320H547.27ZM548.4 1312.79H549.52V1320H548.4ZM549.52 1312.79H550.64V1320H549.52ZM550.64 1312.79H551.76V1320H550.64ZM551.76 1312.79H552.88V1320H551.76ZM552.88 1312.79H554V1320H552.88ZM554 1312.79H555.12V1320H554ZM555.12 1312.79H556.25V1320H555.12ZM556.25 1312.79H557.37V1320H556.25ZM557.37 1305.57H558.49V1320H557.37ZM706.53 1190.14H707.65V1320H706.53ZM707.65 1204.57H708.77V1320H707.65ZM708.77 1240.64H709.9V1320H708.77ZM709.9 1240.64H711.02V1320H709.9ZM711.02 1233.43H712.14V1320H711.02ZM712.14 1255.07H713.26V1320H712.14ZM713.26 1255.07H714.38V1320H713.26ZM714.38 1255.07H715.5V1320H714.38ZM715.5 1255.07H716.62V1320H715.5ZM716.62 1255.07H717.75V1320H716.62ZM717.75 1255.07H718.87V1320H717.75ZM718.87 1262.29H719.99V1320H718.87ZM719.99 1262.29H721.11V1320H719.99ZM721.11 1269.5H722.23V1320H721.11ZM722.23 1269.5H723.35V1320H722.23ZM723.35 1226.21H724.48V1320H723.35ZM724.48 1226.21H725.6V1320H724.48ZM725.6 1226.21H726.72V1320H725.6ZM726.72 1219H727.84V1320H726.72ZM727.84 1226.21H728.96V1320H727.84ZM728.96 1226.21H730.08V1320H728.96ZM730.08 1226.21H731.2V1320H730.08ZM731.2 1233.43H732.33V1320H731.2ZM732.33 1226.21H733.45V1320H732.33ZM733.45 1226.21H734.57V1320H733.45ZM734.57 1226.21H735.69V1320H734.57ZM735.69 1226.21H736.81V1320H735.69ZM736.81 1226.21H737.93V1320H736.81ZM737.93 1262.29H739.06V1320H737.93ZM739.06 1262.29H740.18V1320H739.06ZM740.18 1262.29H741.3V1320H740.18ZM741.3 1255.07H742.42V1320H741.3ZM742.42 1255.07H743.54V1320H742.42ZM743.54 1255.07H744.66V1320H743.54ZM744.66 1255.07H745.78V1320H744.66ZM745.78 1255.07H746.91V1320H745.78ZM746.91 1255.07H748.03V1320H746.91ZM748.03 1262.29H749.15V1320H748.03ZM749.15 1262.29H750.27V1320H749.15ZM750.27 1269.5H751.39V1320H750.27ZM751.39 1269.5H752.51V1320H751.39ZM752.51 1298.36H753.64V1320H752.51ZM753.64 1298.36H754.76V1320H753.64ZM754.76 1298.36H755.88V1320H754.76ZM755.88 1305.57H757V1320H755.88ZM757 1305.57H758.12V1320H757ZM758.12 1305.57H759.24V1320H758.12ZM759.24 1305.57H760.36V1320H759.24ZM760.36 1312.79H761.49V1320H760.36ZM761.49 1312.79H762.61V1320H761.49ZM762.61 1312.79H763.73V1320H762.61ZM763.73 1312.79H764.85V1320H763.73ZM764.85 1298.36H765.97V1320H764.85ZM765.97 1298.36H767.09V1320H765.97ZM767.09 1298.36H768.21V1320H767.09ZM768.21 1298.36H769.34V1320H768.21ZM769.34 1312.79H770.46V1320H769.34ZM770.46 1312.79H771.58V1320H770.46ZM771.58 1312.79H772.7V1320H771.58ZM772.7 1312.79H773.82V1320H772.7ZM773.82 1312.79H774.94V1320H773.82ZM774.94 1312.79H776.07V1320H774.94ZM776.07 1312.79H777.19V1320H776.07ZM777.19 1312.79H778.31V1320H777.19ZM778.31 1312.79H779.43V1320H778.31ZM779.43 1312.79H780.55V1320H779.43ZM780.55 1312.79H781.67V1320H780.55ZM781.67 1312.79H782.79V1320H781.67ZM782.79 1312.79H783.92V1320H782.79ZM783.92 1312.79H785.04V1320H783.92ZM785.04 1312.79H786.16V1320H785.04ZM786.16 1312.79H787.28V1320H786.16ZM787.28 1312.79H788.4V1320H787.28ZM788.4 1312.79H789.52V1320H788.4ZM789.52 1312.79H790.65V1320H789.52ZM790.65 1312.79H791.77V1320H790.65ZM791.77 1312.79H792.89V1320H791.77ZM792.89 1312.79H794.01V1320H792.89ZM794.01 1312.79H795.13V1320H794.01ZM795.13 1312.79H796.25V1320H795.13ZM796.25 1312.79H797.37V1320H796.25ZM797.37 1312.79H798.5V1320H797.37ZM798.5 1312.79H799.62V1320H798.5ZM799.62 1312.79H800.74V1320H799.62ZM800.74 1312.79H801.86V1320H800.74ZM801.86 1312.79H802.98V1320H801.86ZM802.98 1312.79H804.1V1320H802.98ZM804.1 1312.79H805.23V1320H804.1ZM805.23 1312.79H806.35V1320H805.23ZM806.35 1312.79H807.47V1320H806.35ZM807.47 1312.79H808.59V1320H807.47ZM808.59 1312.79H809.71V1320H808.59ZM809.71 1312.79H810.83V1320H809.71ZM810.83 1312.79H811.95V1320H810.83ZM811.95 1312.79H813.08V1320H811.95ZM813.08 1312.79H814.2V1320H813.08ZM814.2 1312.79H815.32V1320H814.2ZM815.32 1312.79H816.44V1320H815.32ZM816.44 1312.79H817.56V1320H816.44ZM817.56 1312.79H818.68V1320H817.56ZM818.68 1312.79H819.81V1320H818.68ZM819.81 1312.79H820.93V1320H819.81ZM820.93 1312.79H822.05V1320H820.93ZM822.05 1312.79H823.17V1320H822.05ZM823.17 1312.79H824.29V1320H823.17ZM824.29 1312.79H825.41V1320H824.29ZM825.41 1312.79H826.53V1320H825.41ZM826.53 1312.79H827.66V1320H826.53ZM827.66 1312.79H828.78V1320H827.66ZM828.78 1312.79H829.9V1320H828.78ZM829.9 1312.79H831.02V1320H829.9ZM831.02 1312.79H832.14V1320H831.02ZM832.14 1312.79H833.26V1320H832.14ZM833.26 1312.79H834.39V1320H833.26ZM834.39 1312.79H835.51V1320H834.39ZM835.51 1312.79H836.63V1320H835.51ZM836.63 1312.79H837.75V1320H836.63ZM837.75 1312.79H838.87V1320H837.75ZM838.87 1312.79H839.99V1320H838.87ZM839.99 1312.79H841.11V1320H839.99ZM841.11 1312.79H842.24V1320H841.11ZM842.24 1312.79H843.36V1320H842.24ZM843.36 1312.79H844.48V1320H843.36ZM844.48 1312.79H845.6V1320H844.48ZM845.6 1312.79H846.72V1320H845.6ZM846.72 1312.79H847.84V1320H846.72ZM847.84 1312.79H848.96V1320H847.84ZM848.96 1312.79H850.09V1320H848.96ZM850.09 1312.79H851.21V1320H850.09ZM851.21 1312.79H852.33V1320H851.21ZM852.33 1312.79H853.45V1320H852.33ZM853.45 1312.79H854.57V1320H853.45ZM854.57 1312.79H855.69V1320H854.57ZM855.69 1312.79H856.82V1320H855.69ZM856.82 1312.79H857.94V1320H856.82ZM857.94 1312.79H859.06V1320H857.94ZM859.06 1312.79H860.18V1320H859.06ZM860.18 1312.79H861.3V1320H860.18ZM861.3 1312.79H862.42V1320H861.3ZM862.42 1312.79H863.54V1320H862.42ZM863.54 1312.79H864.67V1320H863.54ZM864.67 1312.79H865.79V1320H864.67ZM865.79 1312.79H866.91V1320H865.79ZM866.91 1312.79H868.03V1320H866.91ZM868.03 1312.79H869.15V1320H868.03ZM869.15 1312.79H870.27V1320H869.15ZM870.27 1312.79H871.4V1320H870.27ZM871.4 1312.79H872.52V1320H871.4ZM872.52 1312.79H873.64V1320H872.52ZM873.64 1312.79H874.76V1320H873.64ZM874.76 1312.79H875.88V1320H874.76ZM875.88 1312.79H877V1320H875.88ZM877 1312.79H878.12V1320H877ZM878.12 1312.79H879.25V1320H878.12ZM879.25 1312.79H880.37V1320H879.25ZM880.37 1312.79H881.49V1320H880.37ZM1029.53 1226.21H1030.65V1320H1029.53ZM1030.65 1226.21H1031.77V1320H1030.65ZM1031.77 1226.21H1032.9V1320H1031.77ZM1032.9 1226.21H1034.02V1320H1032.9ZM1034.02 1226.21H1035.14V1320H1034.02ZM1035.14 1305.57H1036.26V1320H1035.14ZM1036.26 1312.79H1037.38V1320H1036.26ZM1037.38 1312.79H1038.5V1320H1037.38ZM1038.5 1312.79H1039.62V1320H1038.5ZM1039.62 1312.79H1040.75V1320H1039.62ZM1040.75 1312.79H1041.87V1320H1040.75ZM1041.87 1312.79H1042.99V1320H1041.87ZM1042.99 1312.79H1044.11V1320H1042.99ZM1044.11 1312.79H1045.23V1320H1044.11ZM1045.23 1312.79H1046.35V1320H1045.23ZM1046.35 1312.79H1047.48V1320H1046.35ZM1047.48 1312.79H1048.6V1320H1047.48ZM1048.6 1312.79H1049.72V1320H1048.6ZM1049.72 1312.79H1050.84V1320H1049.72ZM1050.84 1312.79H1051.96V1320H1050.84ZM1051.96 1312.79H1053.08V1320H1051.96ZM1053.08 1312.79H1054.2V1320H1053.08ZM1054.2 1312.79H1055.33V1320H1054.2ZM1055.33 1312.79H1056.45V1320H1055.33ZM1056.45 1291.14H1057.57V1320H1056.45ZM1057.57 1276.71H1058.69V1320H1057.57ZM1058.69 1276.71H1059.81V1320H1058.69ZM1059.81 1283.93H1060.93V1320H1059.81ZM1060.93 1312.79H1062.06V1320H1060.93ZM1062.06 1312.79H1063.18V1320H1062.06ZM1063.18 1312.79H1064.3V1320H1063.18ZM1064.3 1312.79H1065.42V1320H1064.3ZM1065.42 1312.79H1066.54V1320H1065.42ZM1066.54 1312.79H1067.66V1320H1066.54ZM1067.66 1312.79H1068.78V1320H1067.66ZM1068.78 1312.79H1069.91V1320H1068.78ZM1069.91 1312.79H1071.03V1320H1069.91ZM1071.03 1312.79H1072.15V1320H1071.03ZM1072.15 1312.79H1073.27V1320H1072.15ZM1073.27 1305.57H1074.39V1320H1073.27ZM1074.39 1291.14H1075.51V1320H1074.39ZM1075.51 1291.14H1076.64V1320H1075.51ZM1076.64 1298.36H1077.76V1320H1076.64ZM1077.76 1312.79H1078.88V1320H1077.76ZM1078.88 1312.79H1080V1320H1078.88ZM1080 1312.79H1081.12V1320H1080ZM1081.12 1312.79H1082.24V1320H1081.12ZM1082.24 1312.79H1083.36V1320H1082.24ZM1083.36 1312.79H1084.49V1320H1083.36ZM1084.49 1312.79H1085.61V1320H1084.49ZM1085.61 1312.79H1086.73V1320H1085.61ZM1086.73 1312.79H1087.85V1320H1086.73ZM1087.85 1312.79H1088.97V1320H1087.85ZM1088.97 1312.79H1090.09V1320H1088.97ZM1090.09 1312.79H1091.21V1320H1090.09ZM1091.21 1312.79H1092.34V1320H1091.21ZM1092.34 1312.79H1093.46V1320H1092.34ZM1093.46 1312.79H1094.58V1320H1093.46ZM1094.58 1312.79H1095.7V1320H1094.58ZM1095.7 1312.79H1096.82V1320H1095.7ZM1096.82 1312.79H1097.94V1320H1096.82ZM1097.94 1312.79H1099.07V1320H1097.94ZM1099.07 1312.79H1100.19V1320H1099.07ZM1100.19 1312.79H1101.31V1320H1100.19ZM1101.31 1312.79H1102.43V1320H1101.31ZM1102.43 1312.79H1103.55V1320H1102.43ZM1103.55 1312.79H1104.67V1320H1103.55ZM1104.67 1312.79H1105.79V1320H1104.67ZM1105.79 1312.79H1106.92V1320H1105.79ZM1106.92 1312.79H1108.04V1320H1106.92ZM1108.04 1312.79H1109.16V1320H1108.04ZM1109.16 1312.79H1110.28V1320H1109.16ZM1110.28 1312.79H1111.4V1320H1110.28ZM1111.4 1312.79H1112.52V1320H1111.4ZM1112.52 1312.79H1113.65V1320H1112.52ZM1113.65 1312.79H1114.77V1320H1113.65ZM1114.77 1312.79H1115.89V1320H1114.77ZM1115.89 1312.79H1117.01V1320H1115.89ZM1117.01 1312.79H1118.13V1320H1117.01ZM1118.13 1312.79H1119.25V1320H1118.13ZM1119.25 1312.79H1120.37V1320H1119.25ZM1120.37 1312.79H1121.5V1320H1120.37ZM1121.5 1312.79H1122.62V1320H1121.5ZM1122.62 1312.79H1123.74V1320H1122.62ZM1123.74 1312.79H1124.86V1320H1123.74ZM1124.86 1312.79H1125.98V1320H1124.86ZM1125.98 1312.79H1127.1V1320H1125.98ZM1127.1 1312.79H1128.23V1320H1127.1ZM1128.23 1312.79H1129.35V1320H1128.23ZM1129.35 1312.79H1130.47V1320H1129.35ZM1130.47 1312.79H1131.59V1320H1130.47ZM1131.59 1312.79H1132.71V1320H1131.59ZM1132.71 1312.79H1133.83V1320H1132.71ZM1133.83 1312.79H1134.95V1320H1133.83ZM1134.95 1312.79H1136.08V1320H1134.95ZM1136.08 1312.79H1137.2V1320H1136.08ZM1137.2 1312.79H1138.32V1320H1137.2ZM1138.32 1312.79H1139.44V1320H1138.32ZM1139.44 1312.79H1140.56V1320H1139.44ZM1140.56 1312.79H1141.68V1320H1140.56ZM1141.68 1312.79H1142.81V1320H1141.68ZM1142.81 1312.79H1143.93V1320H1142.81ZM1143.93 1312.79H1145.05V1320H1143.93ZM1145.05 1312.79H1146.17V1320H1145.05ZM1146.17 1312.79H1147.29V1320H1146.17ZM1147.29 1312.79H1148.41V1320H1147.29ZM1148.41 1312.79H1149.53V1320H1148.41ZM1149.53 1312.79H1150.66V1320H1149.53ZM1150.66 1312.79H1151.78V1320H1150.66ZM1151.78 1312.79H1152.9V1320H1151.78ZM1152.9 1312.79H1154.02V1320H1152.9ZM1154.02 1312.79H1155.14V1320H1154.02ZM1155.14 1312.79H1156.26V1320H1155.14ZM1156.26 1312.79H1157.39V1320H1156.26ZM1157.39 1312.79H1158.51V1320H1157.39ZM1158.51 1312.79H1159.63V1320H1158.51ZM1159.63 1312.79H1160.75V1320H1159.63ZM1160.75 1312.79H1161.87V1320H1160.75ZM1161.87 1312.79H1162.99V1320H1161.87ZM1162.99 1312.79H1164.11V1320H1162.99ZM1164.11 1312.79H1165.24V1320H1164.11ZM1165.24 1312.79H1166.36V1320H1165.24ZM1166.36 1312.79H1167.48V1320H1166.36ZM1167.48 1312.79H1168.6V1320H1167.48ZM1168.6 1312.79H1169.72V1320H1168.6ZM1169.72 1312.79H1170.84V1320H1169.72ZM1170.84 1312.79H1171.96V1320H1170.84ZM1171.96 1305.57H1173.09V1320H1171.96ZM1173.09 1305.57H1174.21V1320H1173.09ZM1174.21 1312.79H1175.33V1320H1174.21ZM1175.33 1312.79H1176.45V1320H1175.33ZM1176.45 1312.79H1177.57V1320H1176.45ZM1177.57 1312.79H1178.69V1320H1177.57ZM1178.69 1312.79H1179.82V1320H1178.69ZM1179.82 1298.36H1180.94V1320H1179.82ZM1180.94 1298.36H1182.06V1320H1180.94ZM1182.06 1298.36H1183.18V1320H1182.06ZM1183.18 1312.79H1184.3V1320H1183.18ZM1184.3 1312.79H1185.42V1320H1184.3ZM1185.42 1312.79H1186.54V1320H1185.42ZM1186.54 1312.79H1187.67V1320H1186.54ZM1187.67 1312.79H1188.79V1320H1187.67ZM1188.79 1312.79H1189.91V1320H1188.79ZM1189.91 1312.79H1191.03V1320H1189.91ZM1191.03 1305.57H1192.15V1320H1191.03ZM1192.15 1305.57H1193.27V1320H1192.15ZM1193.27 1312.79H1194.4V1320H1193.27ZM1194.4 1305.57H1195.52V1320H1194.4ZM1195.52 1305.57H1196.64V1320H1195.52ZM1196.64 1312.79H1197.76V1320H1196.64ZM1197.76 1312.79H1198.88V1320H1197.76ZM1198.88 1312.79H1200V1320H1198.88ZM1200 1312.79H1201.12V1320H1200ZM1201.12 1312.79H1202.25V1320H1201.12ZM1202.25 1305.57H1203.37V1320H1202.25ZM1203.37 1298.36H1204.49V1320H1203.37ZM1352.53 1291.14H1353.65V1320H1352.53ZM1353.65 1291.14H1354.77V1320H1353.65ZM1354.77 1291.14H1355.9V1320H1354.77ZM1355.9 1291.14H1357.02V1320H1355.9ZM1357.02 1298.36H1358.14V1320H1357.02ZM1358.14 1298.36H1359.26V1320H1358.14ZM1359.26 1312.79H1360.38V1320H1359.26ZM1360.38 1312.79H1361.5V1320H1360.38ZM1361.5 1312.79H1362.62V1320H1361.5ZM1362.62 1312.79H1363.75V1320H1362.62ZM1363.75 1312.79H1364.87V1320H1363.75ZM1364.87 1312.79H1365.99V1320H1364.87ZM1365.99 1312.79H1367.11V1320H1365.99ZM1367.11 1312.79H1368.23V1320H1367.11ZM1368.23 1312.79H1369.35V1320H1368.23ZM1369.35 1312.79H1370.48V1320H1369.35ZM1370.48 1312.79H1371.6V1320H1370.48ZM1371.6 1312.79H1372.72V1320H1371.6ZM1372.72 1312.79H1373.84V1320H1372.72ZM1373.84 1312.79H1374.96V1320H1373.84ZM1374.96 1312.79H1376.08V1320H1374.96ZM1376.08 1312.79H1377.2V1320H1376.08ZM1377.2 1312.79H1378.33V1320H1377.2ZM1378.33 1312.79H1379.45V1320H1378.33ZM1379.45 1312.79H1380.57V1320H1379.45ZM1380.57 1312.79H1381.69V1320H1380.57ZM1381.69 1312.79H1382.81V1320H1381.69ZM1382.81 1312.79H1383.93V1320H1382.81ZM1383.93 1312.79H1385.06V1320H1383.93ZM1385.06 1312.79H1386.18V1320H1385.06ZM1386.18 1312.79H1387.3V1320H1386.18ZM1387.3 1312.79H1388.42V1320H1387.3ZM1388.42 1312.79H1389.54V1320H1388.42ZM1389.54 1312.79H1390.66V1320H1389.54ZM1390.66 1312.79H1391.78V1320H1390.66ZM1391.78 1312.79H1392.91V1320H1391.78ZM1392.91 1312.79H1394.03V1320H1392.91ZM1394.03 1305.57H1395.15V1320H1394.03ZM1395.15 1298.36H1396.27V1320H1395.15ZM1396.27 1298.36H1397.39V1320H1396.27ZM1397.39 1298.36H1398.51V1320H1397.39ZM1398.51 1312.79H1399.64V1320H1398.51ZM1399.64 1312.79H1400.76V1320H1399.64ZM1400.76 1312.79H1401.88V1320H1400.76ZM1401.88 1312.79H1403V1320H1401.88ZM1403 1312.79H1404.12V1320H1403ZM1404.12 1312.79H1405.24V1320H1404.12ZM1405.24 1312.79H1406.36V1320H1405.24ZM1406.36 1312.79H1407.49V1320H1406.36ZM1407.49 1312.79H1408.61V1320H1407.49ZM1408.61 1312.79H1409.73V1320H1408.61ZM1409.73 1312.79H1410.85V1320H1409.73ZM1410.85 1312.79H1411.97V1320H1410.85ZM1411.97 1312.79H1413.09V1320H1411.97ZM1413.09 1312.79H1414.21V1320H1413.09ZM1414.21 1312.79H1415.34V1320H1414.21ZM1415.34 1312.79H1416.46V1320H1415.34ZM1416.46 1312.79H1417.58V1320H1416.46ZM1417.58 1312.79H1418.7V1320H1417.58ZM1418.7 1312.79H1419.82V1320H1418.7ZM1419.82 1312.79H1420.94V1320H1419.82ZM1420.94 1312.79H1422.07V1320H1420.94ZM1422.07 1312.79H1423.19V1320H1422.07ZM1423.19 1312.79H1424.31V1320H1423.19ZM1424.31 1312.79H1425.43V1320H1424.31ZM1425.43 1312.79H1426.55V1320H1425.43ZM1426.55 1312.79H1427.67V1320H1426.55ZM1427.67 1312.79H1428.79V1320H1427.67ZM1428.79 1312.79H1429.92V1320H1428.79ZM1429.92 1312.79H1431.04V1320H1429.92ZM1431.04 1312.79H1432.16V1320H1431.04ZM1432.16 1312.79H1433.28V1320H1432.16ZM1433.28 1312.79H1434.4V1320H1433.28ZM1434.4 1312.79H1435.52V1320H1434.4ZM1435.52 1312.79H1436.65V1320H1435.52ZM1436.65 1312.79H1437.77V1320H1436.65ZM1437.77 1312.79H1438.89V1320H1437.77ZM1438.89 1312.79H1440.01V1320H1438.89ZM1440.01 1312.79H1441.13V1320H1440.01ZM1441.13 1312.79H1442.25V1320H1441.13ZM1442.25 1312.79H1443.37V1320H1442.25ZM1443.37 1312.79H1444.5V1320H1443.37ZM1444.5 1312.79H1445.62V1320H1444.5ZM1445.62 1312.79H1446.74V1320H1445.62ZM1446.74 1312.79H1447.86V1320H1446.74ZM1447.86 1312.79H1448.98V1320H1447.86ZM1448.98 1312.79H1450.1V1320H1448.98ZM1450.1 1312.79H1451.23V1320H1450.1ZM1451.23 1312.79H1452.35V1320H1451.23ZM1452.35 1312.79H1453.47V1320H1452.35ZM1453.47 1312.79H1454.59V1320H1453.47ZM1454.59 1312.79H1455.71V1320H1454.59ZM1455.71 1312.79H1456.83V1320H1455.71ZM1456.83 1312.79H1457.95V1320H1456.83ZM1457.95 1312.79H1459.08V1320H1457.95ZM1459.08 1312.79H1460.2V1320H1459.08ZM1460.2 1312.79H1461.32V1320H1460.2ZM1461.32 1312.79H1462.44V1320H1461.32ZM1462.44 1312.79H1463.56V1320H1462.44ZM1463.56 1312.79H1464.68V1320H1463.56ZM1464.68 1312.79H1465.81V1320H1464.68ZM1465.81 1312.79H1466.93V1320H1465.81ZM1466.93 1312.79H1468.05V1320H1466.93ZM1468.05 1312.79H1469.17V1320H1468.05ZM1469.17 1312.79H1470.29V1320H1469.17ZM1470.29 1312.79H1471.41V1320H1470.29ZM1471.41 1312.79H1472.53V1320H1471.41ZM1472.53 1312.79H1473.66V1320H1472.53ZM1473.66 1312.79H1474.78V1320H1473.66ZM1474.78 1312.79H1475.9V1320H1474.78ZM1475.9 1312.79H1477.02V1320H1475.9ZM1477.02 1312.79H1478.14V1320H1477.02ZM1478.14 1312.79H1479.26V1320H1478.14ZM1479.26 1312.79H1480.39V1320H1479.26ZM1480.39 1312.79H1481.51V1320H1480.39ZM1481.51 1312.79H1482.63V1320H1481.51ZM1482.63 1312.79H1483.75V1320H1482.63ZM1483.75 1312.79H1484.87V1320H1483.75ZM1484.87 1312.79H1485.99V1320H1484.87ZM1485.99 1312.79H1487.11V1320H1485.99ZM1487.11 1312.79H1488.24V1320H1487.11ZM1488.24 1312.79H1489.36V1320H1488.24ZM1489.36 1312.79H1490.48V1320H1489.36ZM1490.48 1312.79H1491.6V1320H1490.48ZM1491.6 1312.79H1492.72V1320H1491.6ZM1492.72 1312.79H1493.84V1320H1492.72ZM1493.84 1312.79H1494.96V1320H1493.84ZM1494.96 1312.79H1496.09V1320H1494.96ZM1496.09 1312.79H1497.21V1320H1496.09ZM1497.21 1312.79H1498.33V1320H1497.21ZM1498.33 1312.79H1499.45V1320H1498.33ZM1499.45 1312.79H1500.57V1320H1499.45ZM1500.57 1312.79H1501.69V1320H1500.57ZM1501.69 1312.79H1502.82V1320H1501.69ZM1502.82 1312.79H1503.94V1320H1502.82ZM1503.94 1312.79H1505.06V1320H1503.94ZM1505.06 1312.79H1506.18V1320H1505.06ZM1506.18 1312.79H1507.3V1320H1506.18ZM1507.3 1312.79H1508.42V1320H1507.3ZM1508.42 1312.79H1509.54V1320H1508.42ZM1509.54 1312.79H1510.67V1320H1509.54ZM1510.67 1312.79H1511.79V1320H1510.67ZM1511.79 1312.79H1512.91V1320H1511.79ZM1512.91 1312.79H1514.03V1320H1512.91ZM1514.03 1312.79H1515.15V1320H1514.03ZM1515.15 1312.79H1516.27V1320H1515.15ZM1516.27 1312.79H1517.4V1320H1516.27ZM1517.4 1312.79H1518.52V1320H1517.4ZM1518.52 1312.79H1519.64V1320H1518.52ZM1519.64 1312.79H1520.76V1320H1519.64ZM1520.76 1312.79H1521.88V1320H1520.76ZM1521.88 1312.79H1523V1320H1521.88ZM1523 1312.79H1524.12V1320H1523ZM1524.12 1312.79H1525.25V1320H1524.12ZM1525.25 1312.79H1526.37V1320H1525.25ZM1526.37 1312.79H1527.49V1320H1526.37ZM1527.49 1312.79H1528.61V1320H1527.49ZM1528.61 1312.79H1529.73V1320H1528.61ZM1529.73 1312.79H1530.85V1320H1529.73ZM1530.85 1312.79H1531.98V1320H1530.85ZM1531.98 1312.79H1533.1V1320H1531.98ZM1533.1 1305.57H1534.22V1320H1533.1ZM1534.22 1305.57H1535.34V1320H1534.22ZM1535.34 1312.79H1536.46V1320H1535.34ZM1536.46 1312.79H1537.58V1320H1536.46ZM1537.58 1312.79H1538.7V1320H1537.58ZM1538.7 1312.79H1539.83V1320H1538.7ZM1539.83 1312.79H1540.95V1320H1539.83ZM1540.95 1312.79H1542.07V1320H1540.95ZM1542.07 1312.79H1543.19V1320H1542.07ZM1543.19 1312.79H1544.31V1320H1543.19ZM1544.31 1312.79H1545.43V1320H1544.31ZM1545.43 1312.79H1546.56V1320H1545.43ZM1546.56 1312.79H1547.68V1320H1546.56ZM1547.68 1312.79H1548.8V1320H1547.68ZM1548.8 1305.57H1549.92V1320H1548.8ZM1549.92 1305.57H1551.04V1320H1549.92ZM1551.04 1312.79H1552.16V1320H1551.04ZM1552.16 1312.79H1553.28V1320H1552.16ZM1553.28 1312.79H1554.41V1320H1553.28ZM1554.41 1312.79H1555.53V1320H1554.41ZM1555.53 1312.79H1556.65V1320H1555.53ZM1556.65 1312.79H1557.77V1320H1556.65ZM1557.77 1312.79H1558.89V1320H1557.77ZM1558.89 1312.79H1560.01V1320H1558.89ZM1560.01 1312.79H1561.14V1320H1560.01ZM1561.14 1312.79H1562.26V1320H1561.14ZM1562.26 1312.79H1563.38V1320H1562.26ZM1563.38 1312.79H1564.5V1320H1563.38ZM1564.5 1312.79H1565.62V1320H1564.5ZM1565.62 1312.79H1566.74V1320H1565.62ZM1566.74 1312.79H1567.86V1320H1566.74ZM1567.86 1312.79H1568.99V1320H1567.86ZM1568.99 1312.79H1570.11V1320H1568.99ZM1570.11 1312.79H1571.23V1320H1570.11ZM1571.23 1312.79H1572.35V1320H1571.23ZM1572.35 1312.79H1573.47V1320H1572.35ZM1573.47 1312.79H1574.59V1320H1573.47ZM1574.59 1298.36H1575.71V1320H1574.59ZM1575.71 1291.14H1576.84V1320H1575.71ZM1576.84 1291.14H1577.96V1320H1576.84ZM1577.96 1298.36H1579.08V1320H1577.96ZM1579.08 1298.36H1580.2V1320H1579.08ZM1580.2 1305.57H1581.32V1320H1580.2ZM1581.32 1312.79H1582.44V1320H1581.32ZM1582.44 1312.79H1583.57V1320H1582.44ZM1583.57 1312.79H1584.69V1320H1583.57ZM1584.69 1312.79H1585.81V1320H1584.69ZM1585.81 1305.57H1586.93V1320H1585.81ZM1586.93 1305.57H1588.05V1320H1586.93ZM1588.05 1312.79H1589.17V1320H1588.05ZM1589.17 1312.79H1590.29V1320H1589.17ZM1590.29 1312.79H1591.42V1320H1590.29ZM1591.42 1312.79H1592.54V1320H1591.42ZM1592.54 1312.79H1593.66V1320H1592.54ZM1593.66 1312.79H1594.78V1320H1593.66ZM1594.78 1312.79H1595.9V1320H1594.78ZM1595.9 1312.79H1597.02V1320H1595.9ZM1597.02 1312.79H1598.15V1320H1597.02ZM1598.15 1312.79H1599.27V1320H1598.15ZM1599.27 1312.79H1600.39V1320H1599.27ZM1600.39 1312.79H1601.51V1320H1600.39ZM1601.51 1312.79H1602.63V1320H1601.51ZM1602.63 1312.79H1603.75V1320H1602.63ZM1603.75 1312.79H1604.87V1320H1603.75ZM1604.87 1312.79H1606V1320H1604.87ZM1606 1312.79H1607.12V1320H1606ZM1607.12 1312.79H1608.24V1320H1607.12ZM1608.24 1312.79H1609.36V1320H1608.24ZM1609.36 1312.79H1610.48V1320H1609.36ZM1610.48 1312.79H1611.6V1320H1610.48ZM1611.6 1312.79H1612.73V1320H1611.6ZM1612.73 1312.79H1613.85V1320H1612.73ZM1613.85 1312.79H1614.97V1320H1613.85ZM1614.97 1312.79H1616.09V1320H1614.97ZM1616.09 1312.79H1617.21V1320H1616.09ZM1617.21 1312.79H1618.33V1320H1617.21ZM1618.33 1312.79H1619.45V1320H1618.33ZM1619.45 1312.79H1620.58V1320H1619.45ZM1620.58 1312.79H1621.7V1320H1620.58ZM1621.7 1312.79H1622.82V1320H1621.7ZM1622.82 1312.79H1623.94V1320H1622.82ZM1623.94 1312.79H1625.06V1320H1623.94ZM1625.06 1312.79H1626.18V1320H1625.06ZM1626.18 1312.79H1627.31V1320H1626.18ZM1627.31 1312.79H1628.43V1320H1627.31ZM1628.43 1312.79H1629.55V1320H1628.43ZM1629.55 1312.79H1630.67V1320H1629.55ZM1630.67 1312.79H1631.79V1320H1630.67ZM1631.79 1312.79H1632.91V1320H1631.79ZM1632.91 1312.79H1634.03V1320H1632.91ZM1634.03 1312.79H1635.16V1320H1634.03ZM1635.16 1312.79H1636.28V1320H1635.16ZM1636.28 1312.79H1637.4V1320H1636.28ZM1637.4 1312.79H1638.52V1320H1637.4ZM1638.52 1312.79H1639.64V1320H1638.52ZM1639.64 1312.79H1640.76V1320H1639.64ZM1640.76 1312.79H1641.89V1320H1640.76ZM1641.89 1312.79H1643.01V1320H1641.89ZM1643.01 1312.79H1644.13V1320H1643.01ZM1644.13 1312.79H1645.25V1320H1644.13ZM1645.25 1312.79H1646.37V1320H1645.25ZM1646.37 1312.79H1647.49V1320H1646.37ZM1647.49 1312.79H1648.61V1320H1647.49ZM1648.61 1312.79H1649.74V1320H1648.61ZM1649.74 1312.79H1650.86V1320H1649.74ZM1650.86 1312.79H1651.98V1320H1650.86ZM1651.98 1312.79H1653.1V1320H1651.98ZM1653.1 1312.79H1654.22V1320H1653.1ZM1654.22 1312.79H1655.34V1320H1654.22ZM1655.34 1312.79H1656.46V1320H1655.34ZM1656.46 1312.79H1657.59V1320H1656.46ZM1657.59 1312.79H1658.71V1320H1657.59ZM1658.71 1312.79H1659.83V1320H1658.71ZM1659.83 1312.79H1660.95V1320H1659.83ZM1660.95 1312.79H1662.07V1320H1660.95ZM1662.07 1312.79H1663.19V1320H1662.07ZM1663.19 1312.79H1664.32V1320H1663.19ZM1664.32 1312.79H1665.44V1320H1664.32ZM1665.44 1312.79H1666.56V1320H1665.44ZM1666.56 1312.79H1667.68V1320H1666.56ZM1667.68 1312.79H1668.8V1320H1667.68ZM1668.8 1312.79H1669.92V1320H1668.8ZM1669.92 1312.79H1671.04V1320H1669.92ZM1671.04 1312.79H1672.17V1320H1671.04ZM1672.17 1312.79H1673.29V1320H1672.17ZM1673.29 1312.79H1674.41V1320H1673.29ZM1674.41 1312.79H1675.53V1320H1674.41ZM1675.53 1312.79H1676.65V1320H1675.53ZM1676.65 1312.79H1677.77V1320H1676.65ZM1677.77 1312.79H1678.9V1320H1677.77ZM1678.9 1312.79H1680.02V1320H1678.9ZM1680.02 1312.79H1681.14V1320H1680.02ZM1681.14 1312.79H1682.26V1320H1681.14ZM1682.26 1312.79H1683.38V1320H1682.26ZM1683.38 1312.79H1684.5V1320H1683.38ZM1684.5 1312.79H1685.62V1320H1684.5ZM1685.62 1312.79H1686.75V1320H1685.62ZM1686.75 1312.79H1687.87V1320H1686.75ZM1687.87 1312.79H1688.99V1320H1687.87ZM1688.99 1312.79H1690.11V1320H1688.99ZM1690.11 1312.79H1691.23V1320H1690.11ZM1691.23 1312.79H1692.35V1320H1691.23ZM1692.35 1312.79H1693.48V1320H1692.35ZM1693.48 1312.79H1694.6V1320H1693.48ZM1694.6 1312.79H1695.72V1320H1694.6ZM1695.72 1312.79H1696.84V1320H1695.72ZM1696.84 1312.79H1697.96V1320H1696.84ZM1697.96 1312.79H1699.08V1320H1697.96ZM1699.08 1312.79H1700.2V1320H1699.08ZM1700.2 1312.79H1701.33V1320H1700.2ZM1701.33 1312.79H1702.45V1320H1701.33ZM1702.45 1312.79H1703.57V1320H1702.45ZM1703.57 1312.79H1704.69V1320H1703.57ZM1704.69 1312.79H1705.81V1320H1704.69ZM1705.81 1312.79H1706.93V1320H1705.81ZM1706.93 1312.79H1708.06V1320H1706.93ZM1708.06 1312.79H1709.18V1320H1708.06ZM1709.18 1312.79H1710.3V1320H1709.18ZM1710.3 1312.79H1711.42V1320H1710.3ZM1711.42 1312.79H1712.54V1320H1711.42ZM1712.54 1312.79H1713.66V1320H1712.54ZM1713.66 1312.79H1714.78V1320H1713.66ZM1714.78 1312.79H1715.91V1320H1714.78ZM1715.91 1312.79H1717.03V1320H1715.91ZM1717.03 1312.79H1718.15V1320H1717.03ZM1718.15 1312.79H1719.27V1320H1718.15ZM1719.27 1312.79H1720.39V1320H1719.27ZM1720.39 1312.79H1721.51V1320H1720.39ZM1721.51 1312.79H1722.64V1320H1721.51ZM1722.64 1312.79H1723.76V1320H1722.64ZM1723.76 1312.79H1724.88V1320H1723.76ZM1724.88 1312.79H1726V1320H1724.88ZM1726 1312.79H1727.12V1320H1726ZM1727.12 1312.79H1728.24V1320H1727.12ZM1728.24 1312.79H1729.36V1320H1728.24ZM1729.36 1312.79H1730.49V1320H1729.36ZM1730.49 1312.79H1731.61V1320H1730.49ZM1731.61 1312.79H1732.73V1320H1731.61ZM1732.73 1312.79H1733.85V1320H1732.73ZM1733.85 1312.79H1734.97V1320H1733.85ZM1734.97 1312.79H1736.09V1320H1734.97ZM1736.09 1312.79H1737.21V1320H1736.09ZM1737.21 1312.79H1738.34V1320H1737.21ZM1738.34 1312.79H1739.46V1320H1738.34ZM1739.46 1312.79H1740.58V1320H1739.46ZM1740.58 1312.79H1741.7V1320H1740.58ZM1741.7 1312.79H1742.82V1320H1741.7ZM1742.82 1312.79H1743.94V1320H1742.82ZM1743.94 1312.79H1745.07V1320H1743.94ZM1745.07 1312.79H1746.19V1320H1745.07ZM1746.19 1312.79H1747.31V1320H1746.19ZM1747.31 1312.79H1748.43V1320H1747.31ZM1748.43 1312.79H1749.55V1320H1748.43ZM1749.55 1312.79H1750.67V1320H1749.55ZM1750.67 1305.57H1751.79V1320H1750.67ZM1751.79 1305.57H1752.92V1320H1751.79ZM1752.92 1312.79H1754.04V1320H1752.92ZM1754.04 1312.79H1755.16V1320H1754.04ZM1755.16 1312.79H1756.28V1320H1755.16ZM1756.28 1312.79H1757.4V1320H1756.28ZM1757.4 1305.57H1758.52V1320H1757.4ZM1758.52 1291.14H1759.65V1320H1758.52ZM1759.65 1291.14H1760.77V1320H1759.65ZM1760.77 1291.14H1761.89V1320H1760.77ZM1761.89 1291.14H1763.01V1320H1761.89ZM1763.01 1291.14H1764.13V1320H1763.01ZM1764.13 1291.14H1765.25V1320H1764.13ZM1765.25 1305.57H1766.37V1320H1765.25ZM1766.37 1312.79H1767.5V1320H1766.37ZM1767.5 1312.79H1768.62V1320H1767.5ZM1768.62 1305.57H1769.74V1320H1768.62ZM1769.74 1305.57H1770.86V1320H1769.74ZM1770.86 1312.79H1771.98V1320H1770.86ZM1771.98 1305.57H1773.1V1320H1771.98ZM1773.1 1312.79H1774.23V1320H1773.1ZM1774.23 1305.57H1775.35V1320H1774.23ZM1775.35 1305.57H1776.47V1320H1775.35ZM1776.47 1312.79H1777.59V1320H1776.47ZM1777.59 1305.57H1778.71V1320H1777.59ZM1778.71 1312.79H1779.83V1320H1778.71ZM1779.83 1305.57H1780.95V1320H1779.83ZM1780.95 1312.79H1782.08V1320H1780.95ZM1782.08 1312.79H1783.2V1320H1782.08ZM1783.2 1305.57H1784.32V1320H1783.2ZM1784.32 1305.57H1785.44V1320H1784.32ZM1785.44 1312.79H1786.56V1320H1785.44ZM1786.56 1312.79H1787.68V1320H1786.56ZM1787.68 1305.57H1788.81V1320H1787.68ZM1788.81 1305.57H1789.93V1320H1788.81ZM1789.93 1305.57H1791.05V1320H1789.93ZM1791.05 1305.57H1792.17V1320H1791.05ZM1792.17 1305.57H1793.29V1320H1792.17ZM1793.29 1312.79H1794.41V1320H1793.29ZM1794.41 1305.57H1795.53V1320H1794.41ZM1795.53 1312.79H1796.66V1320H1795.53ZM1796.66 1312.79H1797.78V1320H1796.66ZM1797.78 1312.79H1798.9V1320H1797.78ZM1798.9 1305.57H1800.02V1320H1798.9ZM1800.02 1305.57H1801.14V1320H1800.02ZM1801.14 1312.79H1802.26V1320H1801.14ZM1802.26 1305.57H1803.39V1320H1802.26ZM1803.39 1305.57H1804.51V1320H1803.39ZM1804.51 1305.57H1805.63V1320H1804.51ZM1805.63 1305.57H1806.75V1320H1805.63ZM1806.75 1312.79H1807.87V1320H1806.75ZM1807.87 1312.79H1808.99V1320H1807.87ZM1808.99 1312.79H1810.11V1320H1808.99ZM1810.11 1305.57H1811.24V1320H1810.11ZM1811.24 1305.57H1812.36V1320H1811.24ZM1812.36 1305.57H1813.48V1320H1812.36ZM1813.48 1298.36H1814.6V1320H1813.48ZM1814.6 1298.36H1815.72V1320H1814.6ZM1815.72 1305.57H1816.84V1320H1815.72ZM1816.84 1305.57H1817.96V1320H1816.84ZM1817.96 1312.79H1819.09V1320H1817.96ZM1819.09 1305.57H1820.21V1320H1819.09ZM1820.21 1305.57H1821.33V1320H1820.21ZM1821.33 1312.79H1822.45V1320H1821.33ZM1822.45 1305.57H1823.57V1320H1822.45ZM1823.57 1305.57H1824.69V1320H1823.57ZM1824.69 1305.57H1825.82V1320H1824.69ZM1825.82 1305.57H1826.94V1320H1825.82ZM1826.94 1312.79H1828.06V1320H1826.94ZM1828.06 1305.57H1829.18V1320H1828.06ZM1829.18 1312.79H1830.3V1320H1829.18ZM1830.3 1305.57H1831.42V1320H1830.3ZM1831.42 1305.57H1832.54V1320H1831.42ZM1832.54 1312.79H1833.67V1320H1832.54ZM1833.67 1305.57H1834.79V1320H1833.67ZM1834.79 1312.79H1835.91V1320H1834.79ZM1835.91 1305.57H1837.03V1320H1835.91ZM1837.03 1305.57H1838.15V1320H1837.03ZM1838.15 1305.57H1839.27V1320H1838.15ZM1839.27 1305.57H1840.4V1320H1839.27ZM1840.4 1305.57H1841.52V1320H1840.4ZM1841.52 1305.57H1842.64V1320H1841.52ZM1842.64 1305.57H1843.76V1320H1842.64ZM1843.76 1305.57H1844.88V1320H1843.76ZM1844.88 1305.57H1846V1320H1844.88ZM1846 1305.57H1847.12V1320H1846ZM1847.12 1305.57H1848.25V1320H1847.12ZM1848.25 1305.57H1849.37V1320H1848.25ZM1849.37 1305.57H1850.49V1320H1849.37ZM1850.49 1312.79H1851.61V1320H1850.49ZM1851.61 1305.57H1852.73V1320H1851.61ZM1852.73 1305.57H1853.85V1320H1852.73ZM1853.85 1305.57H1854.98V1320H1853.85ZM1854.98 1305.57H1856.1V1320H1854.98ZM1856.1 1312.79H1857.22V1320H1856.1ZM1857.22 1305.57H1858.34V1320H1857.22ZM1858.34 1305.57H1859.46V1320H1858.34ZM1859.46 1312.79H1860.58V1320H1859.46ZM1860.58 1305.57H1861.7V1320H1860.58ZM1861.7 1312.79H1862.83V1320H1861.7ZM1862.83 1312.79H1863.95V1320H1862.83ZM1863.95 1312.79H1865.07V1320H1863.95ZM1865.07 1305.57H1866.19V1320H1865.07ZM1866.19 1312.79H1867.31V1320H1866.19ZM1867.31 1312.79H1868.43V1320H1867.31ZM1868.43 1305.57H1869.56V1320H1868.43ZM1869.56 1305.57H1870.68V1320H1869.56ZM1870.68 1312.79H1871.8V1320H1870.68ZM1871.8 1305.57H1872.92V1320H1871.8ZM1872.92 1305.57H1874.04V1320H1872.92ZM1874.04 1298.36H1875.16V1320H1874.04ZM1875.16 1298.36H1876.28V1320H1875.16ZM1876.28 1305.57H1877.41V1320H1876.28ZM1877.41 1298.36H1878.53V1320H1877.41ZM1878.53 1298.36H1879.65V1320H1878.53ZM1879.65 1305.57H1880.77V1320H1879.65ZM1880.77 1305.57H1881.89V1320H1880.77ZM1881.89 1312.79H1883.01V1320H1881.89ZM1883.01 1305.57H1884.14V1320H1883.01ZM1884.14 1305.57H1885.26V1320H1884.14ZM1885.26 1305.57H1886.38V1320H1885.26ZM1886.38 1305.57H1887.5V1320H1886.38ZM1887.5 1312.79H1888.62V1320H1887.5ZM1888.62 1312.79H1889.74V1320H1888.62ZM1889.74 1312.79H1890.86V1320H1889.74ZM1890.86 1312.79H1891.99V1320H1890.86ZM1891.99 1305.57H1893.11V1320H1891.99ZM1893.11 1305.57H1894.23V1320H1893.11ZM1894.23 1312.79H1895.35V1320H1894.23ZM1895.35 1312.79H1896.47V1320H1895.35ZM1896.47 1305.57H1897.59V1320H1896.47ZM1897.59 1305.57H1898.71V1320H1897.59ZM1898.71 1305.57H1899.84V1320H1898.71ZM1899.84 1305.57H1900.96V1320H1899.84ZM1900.96 1305.57H1902.08V1320H1900.96ZM1902.08 1305.57H1903.2V1320H1902.08ZM1903.2 1305.57H1904.32V1320H1903.2ZM1904.32 1305.57H1905.44V1320H1904.32ZM1905.44 1312.79H1906.57V1320H1905.44ZM1906.57 1305.57H1907.69V1320H1906.57ZM1907.69 1305.57H1908.81V1320H1907.69ZM1908.81 1312.79H1909.93V1320H1908.81ZM1909.93 1312.79H1911.05V1320H1909.93ZM1911.05 1305.57H1912.17V1320H1911.05ZM1912.17 1305.57H1913.29V1320H1912.17ZM1913.29 1312.79H1914.42V1320H1913.29ZM1914.42 1312.79H1915.54V1320H1914.42ZM1915.54 1312.79H1916.66V1320H1915.54ZM1916.66 1305.57H1917.78V1320H1916.66ZM1917.78 1305.57H1918.9V1320H1917.78ZM1918.9 1312.79H1920.02V1320H1918.9ZM1920.02 1312.79H1921.15V1320H1920.02ZM1921.15 1312.79H1922.27V1320H1921.15ZM1922.27 1312.79H1923.39V1320H1922.27ZM1923.39 1312.79H1924.51V1320H1923.39ZM1924.51 1312.79H1925.63V1320H1924.51ZM1925.63 1305.57H1926.75V1320H1925.63ZM1926.75 1312.79H1927.87V1320H1926.75ZM1927.87 1312.79H1929V1320H1927.87ZM1929 1312.79H1930.12V1320H1929ZM1930.12 1312.79H1931.24V1320H1930.12ZM1931.24 1312.79H1932.36V1320H1931.24ZM1932.36 1312.79H1933.48V1320H1932.36ZM1933.48 1312.79H1934.6V1320H1933.48ZM1934.6 1312.79H1935.73V1320H1934.6ZM1935.73 1298.36H1936.85V1320H1935.73ZM1936.85 1291.14H1937.97V1320H1936.85ZM1937.97 1291.14H1939.09V1320H1937.97ZM1939.09 1298.36H1940.21V1320H1939.09ZM1940.21 1298.36H1941.33V1320H1940.21ZM1941.33 1298.36H1942.45V1320H1941.33ZM1942.45 1298.36H1943.58V1320H1942.45ZM1943.58 1312.79H1944.7V1320H1943.58ZM1944.7 1312.79H1945.82V1320H1944.7ZM1945.82 1312.79H1946.94V1320H1945.82ZM1946.94 1312.79H1948.06V1320H1946.94ZM1948.06 1312.79H1949.18V1320H1948.06ZM1949.18 1312.79H1950.31V1320H1949.18ZM1950.31 1312.79H1951.43V1320H1950.31ZM1951.43 1312.79H1952.55V1320H1951.43ZM1952.55 1312.79H1953.67V1320H1952.55ZM1953.67 1312.79H1954.79V1320H1953.67ZM1954.79 1312.79H1955.91V1320H1954.79ZM1955.91 1312.79H1957.03V1320H1955.91ZM1957.03 1312.79H1958.16V1320H1957.03ZM1958.16 1312.79H1959.28V1320H1958.16ZM1959.28 1312.79H1960.4V1320H1959.28ZM1960.4 1312.79H1961.52V1320H1960.4ZM1961.52 1312.79H1962.64V1320H1961.52ZM1962.64 1312.79H1963.76V1320H1962.64ZM1963.76 1312.79H1964.89V1320H1963.76ZM1964.89 1312.79H1966.01V1320H1964.89ZM1966.01 1312.79H1967.13V1320H1966.01ZM1967.13 1312.79H1968.25V1320H1967.13ZM1968.25 1312.79H1969.37V1320H1968.25ZM1969.37 1312.79H1970.49V1320H1969.37ZM1970.49 1312.79H1971.61V1320H1970.49ZM1971.61 1312.79H1972.74V1320H1971.61ZM1972.74 1312.79H1973.86V1320H1972.74ZM1973.86 1312.79H1974.98V1320H1973.86ZM1974.98 1312.79H1976.1V1320H1974.98ZM1976.1 1312.79H1977.22V1320H1976.1ZM1977.22 1312.79H1978.34V1320H1977.22ZM1978.34 1312.79H1979.46V1320H1978.34ZM1979.46 1312.79H1980.59V1320H1979.46ZM1980.59 1312.79H1981.71V1320H1980.59ZM1981.71 1312.79H1982.83V1320H1981.71ZM1982.83 1312.79H1983.95V1320H1982.83ZM1983.95 1312.79H1985.07V1320H1983.95ZM1985.07 1312.79H1986.19V1320H1985.07ZM1986.19 1312.79H1987.32V1320H1986.19ZM1987.32 1312.79H1988.44V1320H1987.32ZM1988.44 1312.79H1989.56V1320H1988.44ZM1989.56 1312.79H1990.68V1320H1989.56ZM1990.68 1312.79H1991.8V1320H1990.68ZM1991.8 1312.79H1992.92V1320H1991.8ZM1992.92 1312.79H1994.04V1320H1992.92ZM1994.04 1312.79H1995.17V1320H1994.04ZM1995.17 1312.79H1996.29V1320H1995.17ZM1996.29 1312.79H1997.41V1320H1996.29ZM1997.41 1312.79H1998.53V1320H1997.41ZM1998.53 1312.79H1999.65V1320H1998.53ZM1999.65 1312.79H2000.77V1320H1999.65ZM2000.77 1312.79H2001.9V1320H2000.77ZM2001.9 1312.79H2003.02V1320H2001.9ZM2003.02 1312.79H2004.14V1320H2003.02ZM2004.14 1312.79H2005.26V1320H2004.14ZM2005.26 1312.79H2006.38V1320H2005.26ZM2006.38 1312.79H2007.5V1320H2006.38ZM2007.5 1312.79H2008.62V1320H2007.5ZM2008.62 1312.79H2009.75V1320H2008.62ZM2009.75 1312.79H2010.87V1320H2009.75ZM2010.87 1312.79H2011.99V1320H2010.87ZM2011.99 1312.79H2013.11V1320H2011.99ZM2013.11 1312.79H2014.23V1320H2013.11ZM2014.23 1312.79H2015.35V1320H2014.23ZM2015.35 1312.79H2016.48V1320H2015.35ZM2016.48 1312.79H2017.6V1320H2016.48ZM2017.6 1312.79H2018.72V1320H2017.6ZM2018.72 1312.79H2019.84V1320H2018.72ZM2019.84 1312.79H2020.96V1320H2019.84ZM2020.96 1312.79H2022.08V1320H2020.96ZM2022.08 1312.79H2023.2V1320H2022.08ZM2023.2 1312.79H2024.33V1320H2023.2ZM2024.33 1312.79H2025.45V1320H2024.33ZM2025.45 1312.79H2026.57V1320H2025.45ZM2026.57 1312.79H2027.69V1320H2026.57ZM2027.69 1312.79H2028.81V1320H2027.69ZM2028.81 1312.79H2029.93V1320H2028.81ZM2029.93 1312.79H2031.06V1320H2029.93ZM2031.06 1312.79H2032.18V1320H2031.06ZM2032.18 1312.79H2033.3V1320H2032.18ZM2033.3 1312.79H2034.42V1320H2033.3ZM2034.42 1312.79H2035.54V1320H2034.42ZM2035.54 1312.79H2036.66V1320H2035.54ZM2036.66 1312.79H2037.78V1320H2036.66ZM2037.78 1312.79H2038.91V1320H2037.78ZM2038.91 1312.79H2040.03V1320H2038.91ZM2040.03 1312.79H2041.15V1320H2040.03ZM2041.15 1312.79H2042.27V1320H2041.15ZM2042.27 1312.79H2043.39V1320H2042.27ZM2043.39 1312.79H2044.51V1320H2043.39ZM2044.51 1312.79H2045.64V1320H2044.51ZM2045.64 1312.79H2046.76V1320H2045.64ZM2046.76 1312.79H2047.88V1320H2046.76ZM2047.88 1312.79H2049V1320H2047.88ZM2049 1312.79H2050.12V1320H2049ZM2050.12 1312.79H2051.24V1320H2050.12ZM2051.24 1312.79H2052.36V1320H2051.24ZM2052.36 1312.79H2053.49V1320H2052.36ZM2053.49 1312.79H2054.61V1320H2053.49ZM2054.61 1312.79H2055.73V1320H2054.61ZM2055.73 1312.79H2056.85V1320H2055.73ZM2056.85 1305.57H2057.97V1320H2056.85ZM2057.97 1312.79H2059.09V1320H2057.97ZM2059.09 1312.79H2060.21V1320H2059.09ZM2060.21 1312.79H2061.34V1320H2060.21ZM2061.34 1312.79H2062.46V1320H2061.34ZM2062.46 1312.79H2063.58V1320H2062.46ZM2063.58 1312.79H2064.7V1320H2063.58ZM2064.7 1312.79H2065.82V1320H2064.7ZM2065.82 1312.79H2066.94V1320H2065.82ZM2066.94 1312.79H2068.07V1320H2066.94ZM2068.07 1312.79H2069.19V1320H2068.07ZM2069.19 1312.79H2070.31V1320H2069.19ZM2070.31 1312.79H2071.43V1320H2070.31ZM2071.43 1312.79H2072.55V1320H2071.43ZM2072.55 1312.79H2073.67V1320H2072.55ZM2073.67 1312.79H2074.79V1320H2073.67ZM2074.79 1312.79H2075.92V1320H2074.79ZM2075.92 1312.79H2077.04V1320H2075.92ZM2077.04 1305.57H2078.16V1320H2077.04ZM2078.16 1312.79H2079.28V1320H2078.16ZM2079.28 1312.79H2080.4V1320H2079.28ZM2080.4 1312.79H2081.52V1320H2080.4ZM2081.52 1312.79H2082.65V1320H2081.52ZM2082.65 1305.57H2083.77V1320H2082.65ZM2083.77 1305.57H2084.89V1320H2083.77ZM2084.89 1312.79H2086.01V1320H2084.89ZM2086.01 1312.79H2087.13V1320H2086.01ZM2087.13 1312.79H2088.25V1320H2087.13ZM2088.25 1298.36H2089.37V1320H2088.25ZM2089.37 1298.36H2090.5V1320H2089.37ZM2090.5 1312.79H2091.62V1320H2090.5ZM2091.62 1312.79H2092.74V1320H2091.62ZM2092.74 1312.79H2093.86V1320H2092.74ZM2093.86 1305.57H2094.98V1320H2093.86ZM2094.98 1312.79H2096.1V1320H2094.98ZM2096.1 1312.79H2097.23V1320H2096.1ZM2097.23 1312.79H2098.35V1320H2097.23ZM2098.35 1305.57H2099.47V1320H2098.35ZM2099.47 1312.79H2100.59V1320H2099.47ZM2100.59 1312.79H2101.71V1320H2100.59ZM2101.71 1305.57H2102.83V1320H2101.71ZM2102.83 1312.79H2103.95V1320H2102.83ZM2103.95 1305.57H2105.08V1320H2103.95ZM2105.08 1312.79H2106.2V1320H2105.08ZM2106.2 1305.57H2107.32V1320H2106.2ZM2107.32 1312.79H2108.44V1320H2107.32ZM2108.44 1312.79H2109.56V1320H2108.44ZM2109.56 1305.57H2110.68V1320H2109.56ZM2110.68 1312.79H2111.81V1320H2110.68ZM2111.81 1305.57H2112.93V1320H2111.81ZM2112.93 1305.57H2114.05V1320H2112.93ZM2114.05 1312.79H2115.17V1320H2114.05ZM2115.17 1312.79H2116.29V1320H2115.17ZM2116.29 1298.36H2117.41V1320H2116.29ZM2117.41 1291.14H2118.53V1320H2117.41ZM2118.53 1291.14H2119.66V1320H2118.53ZM2119.66 1298.36H2120.78V1320H2119.66ZM2120.78 1291.14H2121.9V1320H2120.78ZM2121.9 1298.36H2123.02V1320H2121.9ZM2123.02 1305.57H2124.14V1320H2123.02ZM2124.14 1298.36H2125.26V1320H2124.14ZM2125.26 1312.79H2126.39V1320H2125.26ZM2126.39 1312.79H2127.51V1320H2126.39ZM2127.51 1305.57H2128.63V1320H2127.51ZM2128.63 1312.79H2129.75V1320H2128.63ZM2129.75 1298.36H2130.87V1320H2129.75ZM2130.87 1312.79H2131.99V1320H2130.87ZM2131.99 1312.79H2133.11V1320H2131.99ZM2133.11 1305.57H2134.24V1320H2133.11ZM2134.24 1305.57H2135.36V1320H2134.24ZM2135.36 1305.57H2136.48V1320H2135.36ZM2136.48 1312.79H2137.6V1320H2136.48ZM2137.6 1312.79H2138.72V1320H2137.6ZM2138.72 1305.57H2139.84V1320H2138.72ZM2139.84 1305.57H2140.96V1320H2139.84ZM2140.96 1312.79H2142.09V1320H2140.96ZM2142.09 1305.57H2143.21V1320H2142.09ZM2143.21 1312.79H2144.33V1320H2143.21ZM2144.33 1305.57H2145.45V1320H2144.33ZM2145.45 1305.57H2146.57V1320H2145.45ZM2146.57 1312.79H2147.69V1320H2146.57ZM2147.69 1305.57H2148.82V1320H2147.69ZM2148.82 1305.57H2149.94V1320H2148.82ZM2149.94 1312.79H2151.06V1320H2149.94ZM2151.06 1305.57H2152.18V1320H2151.06ZM2152.18 1312.79H2153.3V1320H2152.18ZM2153.3 1298.36H2154.42V1320H2153.3ZM2154.42 1312.79H2155.54V1320H2154.42ZM2155.54 1305.57H2156.67V1320H2155.54ZM2156.67 1305.57H2157.79V1320H2156.67ZM2157.79 1305.57H2158.91V1320H2157.79ZM2158.91 1312.79H2160.03V1320H2158.91ZM2160.03 1312.79H2161.15V1320H2160.03ZM2161.15 1298.36H2162.27V1320H2161.15ZM2162.27 1312.79H2163.4V1320H2162.27ZM2163.4 1305.57H2164.52V1320H2163.4ZM2164.52 1305.57H2165.64V1320H2164.52ZM2165.64 1305.57H2166.76V1320H2165.64ZM2166.76 1312.79H2167.88V1320H2166.76ZM2167.88 1298.36H2169V1320H2167.88ZM2169 1312.79H2170.12V1320H2169ZM2170.12 1305.57H2171.25V1320H2170.12ZM2171.25 1305.57H2172.37V1320H2171.25ZM2172.37 1298.36H2173.49V1320H2172.37ZM2321.53 1211.79H2322.65V1320H2321.53ZM2322.65 1226.21H2323.77V1320H2322.65ZM2323.77 1240.64H2324.9V1320H2323.77ZM2324.9 1211.79H2326.02V1320H2324.9ZM2326.02 1240.64H2327.14V1320H2326.02ZM2327.14 1219H2328.26V1320H2327.14ZM2328.26 1226.21H2329.38V1320H2328.26ZM2329.38 1240.64H2330.5V1320H2329.38ZM2330.5 1211.79H2331.62V1320H2330.5ZM2331.62 1240.64H2332.75V1320H2331.62ZM2332.75 1247.86H2333.87V1320H2332.75ZM2333.87 1276.71H2334.99V1320H2333.87ZM2334.99 1298.36H2336.11V1320H2334.99ZM2336.11 1255.07H2337.23V1320H2336.11ZM2337.23 1255.07H2338.35V1320H2337.23ZM2338.35 1255.07H2339.48V1320H2338.35ZM2339.48 1262.29H2340.6V1320H2339.48ZM2340.6 1255.07H2341.72V1320H2340.6ZM2341.72 1247.86H2342.84V1320H2341.72ZM2342.84 1247.86H2343.96V1320H2342.84ZM2343.96 1276.71H2345.08V1320H2343.96ZM2345.08 1269.5H2346.2V1320H2345.08ZM2346.2 1247.86H2347.33V1320H2346.2ZM2347.33 1247.86H2348.45V1320H2347.33ZM2348.45 1262.29H2349.57V1320H2348.45ZM2349.57 1298.36H2350.69V1320H2349.57ZM2350.69 1298.36H2351.81V1320H2350.69ZM2351.81 1298.36H2352.93V1320H2351.81ZM2352.93 1298.36H2354.06V1320H2352.93ZM2354.06 1283.93H2355.18V1320H2354.06ZM2355.18 1291.14H2356.3V1320H2355.18ZM2356.3 1298.36H2357.42V1320H2356.3ZM2357.42 1298.36H2358.54V1320H2357.42ZM2358.54 1283.93H2359.66V1320H2358.54ZM2359.66 1269.5H2360.78V1320H2359.66ZM2360.78 1276.71H2361.91V1320H2360.78ZM2361.91 1283.93H2363.03V1320H2361.91ZM2363.03 1276.71H2364.15V1320H2363.03ZM2364.15 1276.71H2365.27V1320H2364.15ZM2365.27 1276.71H2366.39V1320H2365.27ZM2366.39 1276.71H2367.51V1320H2366.39ZM2367.51 1283.93H2368.64V1320H2367.51ZM2368.64 1276.71H2369.76V1320H2368.64ZM2369.76 1276.71H2370.88V1320H2369.76ZM2370.88 1276.71H2372V1320H2370.88ZM2372 1283.93H2373.12V1320H2372ZM2373.12 1291.14H2374.24V1320H2373.12ZM2374.24 1291.14H2375.36V1320H2374.24ZM2375.36 1305.57H2376.49V1320H2375.36ZM2376.49 1305.57H2377.61V1320H2376.49ZM2377.61 1312.79H2378.73V1320H2377.61ZM2378.73 1312.79H2379.85V1320H2378.73ZM2379.85 1305.57H2380.97V1320H2379.85ZM2380.97 1312.79H2382.09V1320H2380.97ZM2382.09 1312.79H2383.21V1320H2382.09ZM2383.21 1305.57H2384.34V1320H2383.21ZM2384.34 1312.79H2385.46V1320H2384.34ZM2385.46 1305.57H2386.58V1320H2385.46ZM2386.58 1312.79H2387.7V1320H2386.58ZM2387.7 1305.57H2388.82V1320H2387.7ZM2388.82 1312.79H2389.94V1320H2388.82ZM2389.94 1305.57H2391.07V1320H2389.94ZM2391.07 1312.79H2392.19V1320H2391.07ZM2392.19 1305.57H2393.31V1320H2392.19ZM2393.31 1312.79H2394.43V1320H2393.31ZM2394.43 1305.57H2395.55V1320H2394.43ZM2395.55 1305.57H2396.67V1320H2395.55ZM2396.67 1312.79H2397.79V1320H2396.67ZM2397.79 1305.57H2398.92V1320H2397.79ZM2398.92 1305.57H2400.04V1320H2398.92ZM2400.04 1312.79H2401.16V1320H2400.04ZM2401.16 1305.57H2402.28V1320H2401.16ZM2402.28 1312.79H2403.4V1320H2402.28ZM2403.4 1305.57H2404.52V1320H2403.4ZM2404.52 1305.57H2405.65V1320H2404.52ZM2405.65 1305.57H2406.77V1320H2405.65ZM2406.77 1312.79H2407.89V1320H2406.77ZM2407.89 1305.57H2409.01V1320H2407.89ZM2409.01 1305.57H2410.13V1320H2409.01ZM2410.13 1305.57H2411.25V1320H2410.13ZM2411.25 1305.57H2412.37V1320H2411.25ZM2412.37 1312.79H2413.5V1320H2412.37ZM2413.5 1305.57H2414.62V1320H2413.5Z" fill="#9debc1"/>
<path d="M235.49 1298.36H236.61V1320H235.49ZM236.61 1298.36H237.73V1320H236.61ZM237.73 1305.57H238.85V1320H237.73ZM238.85 1305.57H239.98V1320H238.85ZM239.98 1305.57H241.1V1320H239.98ZM241.1 1298.36H242.22V1320H241.1ZM242.22 1298.36H243.34V1320H242.22ZM243.34 1298.36H244.46V1320H243.34ZM244.46 1305.57H245.58V1320H244.46ZM245.58 1305.57H246.7V1320H245.58ZM246.7 1298.36H247.83V1320H246.7ZM247.83 1298.36H248.95V1320H247.83ZM248.95 1305.57H250.07V1320H248.95ZM250.07 1305.57H251.19V1320H250.07ZM251.19 1118H252.31V1320H251.19ZM252.31 1118H253.43V1320H252.31ZM253.43 1154.07H254.56V1320H253.43ZM254.56 1190.14H255.68V1320H254.56ZM255.68 1219H256.8V1320H255.68ZM256.8 1190.14H257.92V1320H256.8ZM257.92 1190.14H259.04V1320H257.92ZM259.04 1074.71H260.16V1320H259.04ZM260.16 1060.29H261.28V1320H260.16ZM261.28 1175.71H262.41V1320H261.28ZM262.41 1089.14H263.53V1320H262.41ZM263.53 1031.43H264.65V1320H263.53ZM264.65 1031.43H265.77V1320H264.65ZM265.77 1045.86H266.89V1320H265.77ZM266.89 1089.14H268.01V1320H266.89ZM268.01 1190.14H269.14V1320H268.01ZM269.14 1074.71H270.26V1320H269.14ZM270.26 1103.57H271.38V1320H270.26ZM271.38 1103.57H272.5V1320H271.38ZM272.5 1060.29H273.62V1320H272.5ZM273.62 1060.29H274.74V1320H273.62ZM274.74 1197.36H275.86V1320H274.74ZM275.86 1197.36H276.99V1320H275.86ZM276.99 1233.43H278.11V1320H276.99ZM278.11 1089.14H279.23V1320H278.11ZM279.23 1204.57H280.35V1320H279.23ZM280.35 1219H281.47V1320H280.35ZM281.47 1219H282.59V1320H281.47ZM282.59 1240.64H283.71V1320H282.59ZM283.71 1262.29H284.84V1320H283.71ZM284.84 1269.5H285.96V1320H284.84ZM285.96 1283.93H287.08V1320H285.96ZM287.08 1283.93H288.2V1320H287.08ZM288.2 1269.5H289.32V1320H288.2ZM289.32 1255.07H290.44V1320H289.32ZM290.44 1240.64H291.57V1320H290.44ZM291.57 1240.64H292.69V1320H291.57ZM292.69 995.36H293.81V1320H292.69ZM293.81 901.57H294.93V1320H293.81ZM294.93 901.57H296.05V1320H294.93ZM296.05 1038.64H297.17V1320H296.05ZM297.17 1074.71H298.29V1320H297.17ZM298.29 1074.71H299.42V1320H298.29ZM299.42 1024.21H300.54V1320H299.42ZM300.54 1002.57H301.66V1320H300.54ZM301.66 1139.64H302.78V1320H301.66ZM302.78 1139.64H303.9V1320H302.78ZM303.9 1233.43H305.02V1320H303.9ZM305.02 1132.43H306.15V1320H305.02ZM306.15 1125.21H307.27V1320H306.15ZM307.27 1089.14H308.39V1320H307.27ZM308.39 1226.21H309.51V1320H308.39ZM309.51 1146.86H310.63V1320H309.51ZM310.63 1139.64H311.75V1320H310.63ZM311.75 1139.64H312.87V1320H311.75ZM312.87 1139.64H314V1320H312.87ZM314 1175.71H315.12V1320H314ZM315.12 1211.79H316.24V1320H315.12ZM316.24 1211.79H317.36V1320H316.24ZM317.36 1211.79H318.48V1320H317.36ZM318.48 1154.07H319.6V1320H318.48ZM319.6 1103.57H320.73V1320H319.6ZM320.73 1103.57H321.85V1320H320.73ZM321.85 1204.57H322.97V1320H321.85ZM322.97 1204.57H324.09V1320H322.97ZM324.09 1204.57H325.21V1320H324.09ZM325.21 1226.21H326.33V1320H325.21ZM326.33 1053.07H327.45V1320H326.33ZM327.45 1053.07H328.58V1320H327.45ZM328.58 1045.86H329.7V1320H328.58ZM329.7 1045.86H330.82V1320H329.7ZM330.82 1168.5H331.94V1320H330.82ZM331.94 1204.57H333.06V1320H331.94ZM333.06 1204.57H334.18V1320H333.06ZM334.18 1204.57H335.31V1320H334.18ZM335.31 1118H336.43V1320H335.31ZM336.43 1053.07H337.55V1320H336.43ZM337.55 1053.07H338.67V1320H337.55ZM338.67 1089.14H339.79V1320H338.67ZM339.79 966.5H340.91V1320H339.79ZM340.91 966.5H342.03V1320H340.91ZM342.03 1017H343.16V1320H342.03ZM343.16 1017H344.28V1320H343.16ZM344.28 1074.71H345.4V1320H344.28ZM345.4 1110.79H346.52V1320H345.4ZM346.52 1161.29H347.64V1320H346.52ZM347.64 1211.79H348.76V1320H347.64ZM348.76 1211.79H349.89V1320H348.76ZM349.89 1247.86H351.01V1320H349.89ZM351.01 1226.21H352.13V1320H351.01ZM352.13 1226.21H353.25V1320H352.13ZM353.25 1247.86H354.37V1320H353.25ZM354.37 1247.86H355.49V1320H354.37ZM355.49 1233.43H356.61V1320H355.49ZM356.61 1269.5H357.74V1320H356.61ZM357.74 1226.21H358.86V1320H357.74ZM358.86 1197.36H359.98V1320H358.86ZM359.98 1190.14H361.1V1320H359.98ZM361.1 1154.07H362.22V1320H361.1ZM362.22 1146.86H363.34V1320H362.22ZM363.34 1146.86H364.46V1320H363.34ZM364.46 1168.5H365.59V1320H364.46ZM365.59 1017H366.71V1320H365.59ZM366.71 952.07H367.83V1320H366.71ZM367.83 1190.14H368.95V1320H367.83ZM368.95 1081.93H370.07V1320H368.95ZM370.07 1240.64H371.19V1320H370.07ZM371.19 1240.64H372.32V1320H371.19ZM372.32 1211.79H373.44V1320H372.32ZM373.44 1211.79H374.56V1320H373.44ZM374.56 1204.57H375.68V1320H374.56ZM375.68 1226.21H376.8V1320H375.68ZM376.8 1226.21H377.92V1320H376.8ZM377.92 1226.21H379.04V1320H377.92ZM379.04 1226.21H380.17V1320H379.04ZM380.17 1233.43H381.29V1320H380.17ZM381.29 1154.07H382.41V1320H381.29ZM382.41 1154.07H383.53V1320H382.41ZM558.49 1305.57H559.61V1320H558.49ZM559.61 1305.57H560.73V1320H559.61ZM560.73 1305.57H561.85V1320H560.73ZM561.85 1305.57H562.98V1320H561.85ZM562.98 1305.57H564.1V1320H562.98ZM564.1 1305.57H565.22V1320H564.1ZM565.22 1305.57H566.34V1320H565.22ZM566.34 1305.57H567.46V1320H566.34ZM567.46 1305.57H568.58V1320H567.46ZM568.58 1305.57H569.7V1320H568.58ZM569.7 1240.64H570.83V1320H569.7ZM570.83 1240.64H571.95V1320H570.83ZM571.95 1240.64H573.07V1320H571.95ZM573.07 1240.64H574.19V1320H573.07ZM574.19 1240.64H575.31V1320H574.19ZM575.31 1211.79H576.43V1320H575.31ZM576.43 1211.79H577.56V1320H576.43ZM577.56 1110.79H578.68V1320H577.56ZM578.68 1017H579.8V1320H578.68ZM579.8 1031.43H580.92V1320H579.8ZM580.92 1038.64H582.04V1320H580.92ZM582.04 1038.64H583.16V1320H582.04ZM583.16 1038.64H584.28V1320H583.16ZM584.28 1038.64H585.41V1320H584.28ZM585.41 1089.14H586.53V1320H585.41ZM586.53 1017H587.65V1320H586.53ZM587.65 1002.57H588.77V1320H587.65ZM588.77 1002.57H589.89V1320H588.77ZM589.89 1190.14H591.01V1320H589.89ZM591.01 1233.43H592.14V1320H591.01ZM592.14 1262.29H593.26V1320H592.14ZM593.26 1233.43H594.38V1320H593.26ZM594.38 1255.07H595.5V1320H594.38ZM595.5 1255.07H596.62V1320H595.5ZM596.62 1255.07H597.74V1320H596.62ZM597.74 1089.14H598.86V1320H597.74ZM598.86 1089.14H599.99V1320H598.86ZM599.99 1017H601.11V1320H599.99ZM601.11 1038.64H602.23V1320H601.11ZM602.23 1089.14H603.35V1320H602.23ZM603.35 1089.14H604.47V1320H603.35ZM604.47 1247.86H605.59V1320H604.47ZM605.59 1211.79H606.71V1320H605.59ZM606.71 1226.21H607.84V1320H606.71ZM607.84 1226.21H608.96V1320H607.84ZM608.96 1211.79H610.08V1320H608.96ZM610.08 1125.21H611.2V1320H610.08ZM611.2 1125.21H612.32V1320H611.2ZM612.32 1017H613.44V1320H612.32ZM613.44 1017H614.57V1320H613.44ZM614.57 1067.5H615.69V1320H614.57ZM615.69 1204.57H616.81V1320H615.69ZM616.81 1175.71H617.93V1320H616.81ZM617.93 1175.71H619.05V1320H617.93ZM619.05 1139.64H620.17V1320H619.05ZM620.17 1139.64H621.29V1320H620.17ZM621.29 1089.14H622.42V1320H621.29ZM622.42 937.64H623.54V1320H622.42ZM623.54 865.5H624.66V1320H623.54ZM624.66 980.93H625.78V1320H624.66ZM625.78 1103.57H626.9V1320H625.78ZM626.9 1103.57H628.02V1320H626.9ZM628.02 1219H629.15V1320H628.02ZM629.15 1219H630.27V1320H629.15ZM630.27 1197.36H631.39V1320H630.27ZM631.39 1197.36H632.51V1320H631.39ZM632.51 1190.14H633.63V1320H632.51ZM633.63 1190.14H634.75V1320H633.63ZM634.75 1255.07H635.87V1320H634.75ZM635.87 1240.64H637V1320H635.87ZM637 1182.93H638.12V1320H637ZM638.12 1219H639.24V1320H638.12ZM639.24 1146.86H640.36V1320H639.24ZM640.36 1146.86H641.48V1320H640.36ZM641.48 1197.36H642.6V1320H641.48ZM642.6 1154.07H643.73V1320H642.6ZM643.73 1211.79H644.85V1320H643.73ZM644.85 1240.64H645.97V1320H644.85ZM645.97 1247.86H647.09V1320H645.97ZM647.09 1262.29H648.21V1320H647.09ZM648.21 1262.29H649.33V1320H648.21ZM649.33 1262.29H650.45V1320H649.33ZM650.45 1262.29H651.58V1320H650.45ZM651.58 1269.5H652.7V1320H651.58ZM652.7 1269.5H653.82V1320H652.7ZM653.82 1283.93H654.94V1320H653.82ZM654.94 1283.93H656.06V1320H654.94ZM656.06 1283.93H657.18V1320H656.06ZM657.18 1283.93H658.31V1320H657.18ZM658.31 1269.5H659.43V1320H658.31ZM659.43 1204.57H660.55V1320H659.43ZM660.55 1204.57H661.67V1320H660.55ZM661.67 1226.21H662.79V1320H661.67ZM662.79 1226.21H663.91V1320H662.79ZM663.91 1045.86H665.03V1320H663.91ZM665.03 1045.86H666.16V1320H665.03ZM666.16 1103.57H667.28V1320H666.16ZM667.28 1053.07H668.4V1320H667.28ZM668.4 1053.07H669.52V1320H668.4ZM669.52 1038.64H670.64V1320H669.52ZM670.64 1038.64H671.76V1320H670.64ZM671.76 1038.64H672.89V1320H671.76ZM672.89 1038.64H674.01V1320H672.89ZM674.01 1038.64H675.13V1320H674.01ZM675.13 1168.5H676.25V1320H675.13ZM676.25 1168.5H677.37V1320H676.25ZM677.37 1262.29H678.49V1320H677.37ZM678.49 1219H679.61V1320H678.49ZM679.61 1161.29H680.74V1320H679.61ZM680.74 1154.07H681.86V1320H680.74ZM681.86 1154.07H682.98V1320H681.86ZM682.98 1219H684.1V1320H682.98ZM684.1 1240.64H685.22V1320H684.1ZM685.22 1240.64H686.34V1320H685.22ZM686.34 1255.07H687.46V1320H686.34ZM687.46 1276.71H688.59V1320H687.46ZM688.59 1255.07H689.71V1320H688.59ZM689.71 1255.07H690.83V1320H689.71ZM690.83 1255.07H691.95V1320H690.83ZM691.95 1283.93H693.07V1320H691.95ZM693.07 1154.07H694.19V1320H693.07ZM694.19 1154.07H695.32V1320H694.19ZM695.32 1175.71H696.44V1320H695.32ZM696.44 1118H697.56V1320H696.44ZM697.56 1118H698.68V1320H697.56ZM698.68 1204.57H699.8V1320H698.68ZM699.8 1240.64H700.92V1320H699.8ZM700.92 1276.71H702.04V1320H700.92ZM702.04 1197.36H703.17V1320H702.04ZM703.17 1118H704.29V1320H703.17ZM704.29 1118H705.41V1320H704.29ZM705.41 1154.07H706.53V1320H705.41ZM881.49 1298.36H882.61V1320H881.49ZM882.61 1298.36H883.73V1320H882.61ZM883.73 1305.57H884.85V1320H883.73ZM884.85 1305.57H885.98V1320H884.85ZM885.98 1305.57H887.1V1320H885.98ZM887.1 1305.57H888.22V1320H887.1ZM888.22 1305.57H889.34V1320H888.22ZM889.34 1305.57H890.46V1320H889.34ZM890.46 1305.57H891.58V1320H890.46ZM891.58 1305.57H892.7V1320H891.58ZM892.7 1305.57H893.83V1320H892.7ZM893.83 1298.36H894.95V1320H893.83ZM894.95 1298.36H896.07V1320H894.95ZM896.07 1298.36H897.19V1320H896.07ZM897.19 1298.36H898.31V1320H897.19ZM898.31 1298.36H899.43V1320H898.31ZM899.43 1283.93H900.56V1320H899.43ZM900.56 1283.93H901.68V1320H900.56ZM901.68 1255.07H902.8V1320H901.68ZM902.8 1168.5H903.92V1320H902.8ZM903.92 1139.64H905.04V1320H903.92ZM905.04 1089.14H906.16V1320H905.04ZM906.16 1074.71H907.28V1320H906.16ZM907.28 1175.71H908.41V1320H907.28ZM908.41 1139.64H909.53V1320H908.41ZM909.53 980.93H910.65V1320H909.53ZM910.65 1053.07H911.77V1320H910.65ZM911.77 1154.07H912.89V1320H911.77ZM912.89 1017H914.01V1320H912.89ZM914.01 1031.43H915.14V1320H914.01ZM915.14 1139.64H916.26V1320H915.14ZM916.26 1182.93H917.38V1320H916.26ZM917.38 1154.07H918.5V1320H917.38ZM918.5 1190.14H919.62V1320H918.5ZM919.62 1247.86H920.74V1320H919.62ZM920.74 1168.5H921.86V1320H920.74ZM921.86 1168.5H922.99V1320H921.86ZM922.99 1255.07H924.11V1320H922.99ZM924.11 1233.43H925.23V1320H924.11ZM925.23 1226.21H926.35V1320H925.23ZM926.35 1226.21H927.47V1320H926.35ZM927.47 1226.21H928.59V1320H927.47ZM928.59 1125.21H929.71V1320H928.59ZM929.71 1038.64H930.84V1320H929.71ZM930.84 1067.5H931.96V1320H930.84ZM931.96 1146.86H933.08V1320H931.96ZM933.08 1240.64H934.2V1320H933.08ZM934.2 1283.93H935.32V1320H934.2ZM935.32 1276.71H936.44V1320H935.32ZM936.44 1175.71H937.57V1320H936.44ZM937.57 1161.29H938.69V1320H937.57ZM938.69 1110.79H939.81V1320H938.69ZM939.81 1132.43H940.93V1320H939.81ZM940.93 1132.43H942.05V1320H940.93ZM942.05 1182.93H943.17V1320H942.05ZM943.17 1269.5H944.29V1320H943.17ZM944.29 1269.5H945.42V1320H944.29ZM945.42 1009.79H946.54V1320H945.42ZM946.54 1009.79H947.66V1320H946.54ZM947.66 1096.36H948.78V1320H947.66ZM948.78 1096.36H949.9V1320H948.78ZM949.9 1096.36H951.02V1320H949.9ZM951.02 1161.29H952.15V1320H951.02ZM952.15 1060.29H953.27V1320H952.15ZM953.27 1168.5H954.39V1320H953.27ZM954.39 1204.57H955.51V1320H954.39ZM955.51 1219H956.63V1320H955.51ZM956.63 1219H957.75V1320H956.63ZM957.75 1233.43H958.87V1320H957.75ZM958.87 1240.64H960V1320H958.87ZM960 1240.64H961.12V1320H960ZM961.12 1233.43H962.24V1320H961.12ZM962.24 1197.36H963.36V1320H962.24ZM963.36 1197.36H964.48V1320H963.36ZM964.48 1233.43H965.6V1320H964.48ZM965.6 1233.43H966.73V1320H965.6ZM966.73 1197.36H967.85V1320H966.73ZM967.85 1226.21H968.97V1320H967.85ZM968.97 1226.21H970.09V1320H968.97ZM970.09 1226.21H971.21V1320H970.09ZM971.21 1219H972.33V1320H971.21ZM972.33 1125.21H973.45V1320H972.33ZM973.45 1118H974.58V1320H973.45ZM974.58 1226.21H975.7V1320H974.58ZM975.7 1197.36H976.82V1320H975.7ZM976.82 1154.07H977.94V1320H976.82ZM977.94 1031.43H979.06V1320H977.94ZM979.06 1031.43H980.18V1320H979.06ZM980.18 1182.93H981.31V1320H980.18ZM981.31 1067.5H982.43V1320H981.31ZM982.43 1067.5H983.55V1320H982.43ZM983.55 1031.43H984.67V1320H983.55ZM984.67 1190.14H985.79V1320H984.67ZM985.79 1190.14H986.91V1320H985.79ZM986.91 1132.43H988.03V1320H986.91ZM988.03 1089.14H989.16V1320H988.03ZM989.16 1089.14H990.28V1320H989.16ZM990.28 1219H991.4V1320H990.28ZM991.4 1204.57H992.52V1320H991.4ZM992.52 1247.86H993.64V1320H992.52ZM993.64 1262.29H994.76V1320H993.64ZM994.76 1096.36H995.89V1320H994.76ZM995.89 1096.36H997.01V1320H995.89ZM997.01 1204.57H998.13V1320H997.01ZM998.13 1247.86H999.25V1320H998.13ZM999.25 1247.86H1000.37V1320H999.25ZM1000.37 1276.71H1001.49V1320H1000.37ZM1001.49 1276.71H1002.61V1320H1001.49ZM1002.61 1045.86H1003.74V1320H1002.61ZM1003.74 1045.86H1004.86V1320H1003.74ZM1004.86 1146.86H1005.98V1320H1004.86ZM1005.98 1146.86H1007.1V1320H1005.98ZM1007.1 1211.79H1008.22V1320H1007.1ZM1008.22 1154.07H1009.34V1320H1008.22ZM1009.34 1154.07H1010.46V1320H1009.34ZM1010.46 1240.64H1011.59V1320H1010.46ZM1011.59 1269.5H1012.71V1320H1011.59ZM1012.71 1146.86H1013.83V1320H1012.71ZM1013.83 1146.86H1014.95V1320H1013.83ZM1014.95 1146.86H1016.07V1320H1014.95ZM1016.07 1146.86H1017.19V1320H1016.07ZM1017.19 1146.86H1018.32V1320H1017.19ZM1018.32 1045.86H1019.44V1320H1018.32ZM1019.44 1045.86H1020.56V1320H1019.44ZM1020.56 1204.57H1021.68V1320H1020.56ZM1021.68 1204.57H1022.8V1320H1021.68ZM1022.8 1276.71H1023.92V1320H1022.8ZM1023.92 1269.5H1025.04V1320H1023.92ZM1025.04 1219H1026.17V1320H1025.04ZM1026.17 1219H1027.29V1320H1026.17ZM1027.29 1269.5H1028.41V1320H1027.29ZM1028.41 1226.21H1029.53V1320H1028.41ZM1204.49 1298.36H1205.61V1320H1204.49ZM1205.61 1305.57H1206.73V1320H1205.61ZM1206.73 1298.36H1207.85V1320H1206.73ZM1207.85 1298.36H1208.98V1320H1207.85ZM1208.98 1240.64H1210.1V1320H1208.98ZM1210.1 1240.64H1211.22V1320H1210.1ZM1211.22 1233.43H1212.34V1320H1211.22ZM1212.34 1204.57H1213.46V1320H1212.34ZM1213.46 1204.57H1214.58V1320H1213.46ZM1214.58 988.14H1215.7V1320H1214.58ZM1215.7 988.14H1216.83V1320H1215.7ZM1216.83 988.14H1217.95V1320H1216.83ZM1217.95 1017H1219.07V1320H1217.95ZM1219.07 1139.64H1220.19V1320H1219.07ZM1220.19 1197.36H1221.31V1320H1220.19ZM1221.31 1197.36H1222.43V1320H1221.31ZM1222.43 1009.79H1223.56V1320H1222.43ZM1223.56 980.93H1224.68V1320H1223.56ZM1224.68 980.93H1225.8V1320H1224.68ZM1225.8 1190.14H1226.92V1320H1225.8ZM1226.92 1067.5H1228.04V1320H1226.92ZM1228.04 1053.07H1229.16V1320H1228.04ZM1229.16 1053.07H1230.28V1320H1229.16ZM1230.28 1038.64H1231.41V1320H1230.28ZM1231.41 1045.86H1232.53V1320H1231.41ZM1232.53 1110.79H1233.65V1320H1232.53ZM1233.65 980.93H1234.77V1320H1233.65ZM1234.77 1031.43H1235.89V1320H1234.77ZM1235.89 1089.14H1237.01V1320H1235.89ZM1237.01 937.64H1238.14V1320H1237.01ZM1238.14 916H1239.26V1320H1238.14ZM1239.26 966.5H1240.38V1320H1239.26ZM1240.38 966.5H1241.5V1320H1240.38ZM1241.5 952.07H1242.62V1320H1241.5ZM1242.62 988.14H1243.74V1320H1242.62ZM1243.74 1089.14H1244.86V1320H1243.74ZM1244.86 988.14H1245.99V1320H1244.86ZM1245.99 988.14H1247.11V1320H1245.99ZM1247.11 988.14H1248.23V1320H1247.11ZM1248.23 879.93H1249.35V1320H1248.23ZM1249.35 879.93H1250.47V1320H1249.35ZM1250.47 995.36H1251.59V1320H1250.47ZM1251.59 995.36H1252.71V1320H1251.59ZM1252.71 944.86H1253.84V1320H1252.71ZM1253.84 887.14H1254.96V1320H1253.84ZM1254.96 887.14H1256.08V1320H1254.96ZM1256.08 966.5H1257.2V1320H1256.08ZM1257.2 966.5H1258.32V1320H1257.2ZM1258.32 966.5H1259.44V1320H1258.32ZM1259.44 995.36H1260.57V1320H1259.44ZM1260.57 980.93H1261.69V1320H1260.57ZM1261.69 1146.86H1262.81V1320H1261.69ZM1262.81 1024.21H1263.93V1320H1262.81ZM1263.93 1118H1265.05V1320H1263.93ZM1265.05 1017H1266.17V1320H1265.05ZM1266.17 1017H1267.29V1320H1266.17ZM1267.29 1017H1268.42V1320H1267.29ZM1268.42 1118H1269.54V1320H1268.42ZM1269.54 1118H1270.66V1320H1269.54ZM1270.66 1132.43H1271.78V1320H1270.66ZM1271.78 1211.79H1272.9V1320H1271.78ZM1272.9 1110.79H1274.02V1320H1272.9ZM1274.02 1161.29H1275.15V1320H1274.02ZM1275.15 1038.64H1276.27V1320H1275.15ZM1276.27 1009.79H1277.39V1320H1276.27ZM1277.39 1009.79H1278.51V1320H1277.39ZM1278.51 1074.71H1279.63V1320H1278.51ZM1279.63 1002.57H1280.75V1320H1279.63ZM1280.75 1081.93H1281.87V1320H1280.75ZM1281.87 980.93H1283V1320H1281.87ZM1283 1110.79H1284.12V1320H1283ZM1284.12 1226.21H1285.24V1320H1284.12ZM1285.24 1168.5H1286.36V1320H1285.24ZM1286.36 1103.57H1287.48V1320H1286.36ZM1287.48 1103.57H1288.6V1320H1287.48ZM1288.6 1125.21H1289.73V1320H1288.6ZM1289.73 1161.29H1290.85V1320H1289.73ZM1290.85 1161.29H1291.97V1320H1290.85ZM1291.97 1204.57H1293.09V1320H1291.97ZM1293.09 1255.07H1294.21V1320H1293.09ZM1294.21 1255.07H1295.33V1320H1294.21ZM1295.33 1262.29H1296.45V1320H1295.33ZM1296.45 1276.71H1297.58V1320H1296.45ZM1297.58 1276.71H1298.7V1320H1297.58ZM1298.7 1247.86H1299.82V1320H1298.7ZM1299.82 1255.07H1300.94V1320H1299.82ZM1300.94 1255.07H1302.06V1320H1300.94ZM1302.06 1276.71H1303.18V1320H1302.06ZM1303.18 1291.14H1304.31V1320H1303.18ZM1304.31 1269.5H1305.43V1320H1304.31ZM1305.43 1269.5H1306.55V1320H1305.43ZM1306.55 1081.93H1307.67V1320H1306.55ZM1307.67 1081.93H1308.79V1320H1307.67ZM1308.79 1031.43H1309.91V1320H1308.79ZM1309.91 1175.71H1311.03V1320H1309.91ZM1311.03 1132.43H1312.16V1320H1311.03ZM1312.16 1132.43H1313.28V1320H1312.16ZM1313.28 1240.64H1314.4V1320H1313.28ZM1314.4 1240.64H1315.52V1320H1314.4ZM1315.52 1247.86H1316.64V1320H1315.52ZM1316.64 1154.07H1317.76V1320H1316.64ZM1317.76 1154.07H1318.89V1320H1317.76ZM1318.89 1247.86H1320.01V1320H1318.89ZM1320.01 1233.43H1321.13V1320H1320.01ZM1321.13 1233.43H1322.25V1320H1321.13ZM1322.25 1247.86H1323.37V1320H1322.25ZM1323.37 1247.86H1324.49V1320H1323.37ZM1324.49 1262.29H1325.61V1320H1324.49ZM1325.61 1139.64H1326.74V1320H1325.61ZM1326.74 1139.64H1327.86V1320H1326.74ZM1327.86 1219H1328.98V1320H1327.86ZM1328.98 1219H1330.1V1320H1328.98ZM1330.1 1219H1331.22V1320H1330.1ZM1331.22 1118H1332.34V1320H1331.22ZM1332.34 1139.64H1333.46V1320H1332.34ZM1333.46 1175.71H1334.59V1320H1333.46ZM1334.59 1226.21H1335.71V1320H1334.59ZM1335.71 1139.64H1336.83V1320H1335.71ZM1336.83 1139.64H1337.95V1320H1336.83ZM1337.95 1110.79H1339.07V1320H1337.95ZM1339.07 1211.79H1340.19V1320H1339.07ZM1340.19 1161.29H1341.32V1320H1340.19ZM1341.32 1204.57H1342.44V1320H1341.32ZM1342.44 1204.57H1343.56V1320H1342.44ZM1343.56 1211.79H1344.68V1320H1343.56ZM1344.68 1276.71H1345.8V1320H1344.68ZM1345.8 1276.71H1346.92V1320H1345.8ZM1346.92 1291.14H1348.04V1320H1346.92ZM1348.04 1291.14H1349.17V1320H1348.04ZM1349.17 1291.14H1350.29V1320H1349.17ZM1350.29 1291.14H1351.41V1320H1350.29ZM1351.41 1291.14H1352.53V1320H1351.41ZM2173.49 1298.36H2174.61V1320H2173.49ZM2174.61 1291.14H2175.73V1320H2174.61ZM2175.73 1305.57H2176.85V1320H2175.73ZM2176.85 1298.36H2177.98V1320H2176.85ZM2177.98 1291.14H2179.1V1320H2177.98ZM2179.1 1298.36H2180.22V1320H2179.1ZM2180.22 1298.36H2181.34V1320H2180.22ZM2181.34 1298.36H2182.46V1320H2181.34ZM2182.46 1298.36H2183.58V1320H2182.46ZM2183.58 1298.36H2184.7V1320H2183.58ZM2184.7 1291.14H2185.83V1320H2184.7ZM2185.83 1219H2186.95V1320H2185.83ZM2186.95 1132.43H2188.07V1320H2186.95ZM2188.07 1190.14H2189.19V1320H2188.07ZM2189.19 1182.93H2190.31V1320H2189.19ZM2190.31 1211.79H2191.43V1320H2190.31ZM2191.43 1182.93H2192.56V1320H2191.43ZM2192.56 1197.36H2193.68V1320H2192.56ZM2193.68 1204.57H2194.8V1320H2193.68ZM2194.8 1211.79H2195.92V1320H2194.8ZM2195.92 1197.36H2197.04V1320H2195.92ZM2197.04 1190.14H2198.16V1320H2197.04ZM2198.16 1233.43H2199.28V1320H2198.16ZM2199.28 1240.64H2200.41V1320H2199.28ZM2200.41 1255.07H2201.53V1320H2200.41ZM2201.53 1262.29H2202.65V1320H2201.53ZM2202.65 1247.86H2203.77V1320H2202.65ZM2203.77 1219H2204.89V1320H2203.77ZM2204.89 1211.79H2206.01V1320H2204.89ZM2206.01 1211.79H2207.14V1320H2206.01ZM2207.14 1204.57H2208.26V1320H2207.14ZM2208.26 1089.14H2209.38V1320H2208.26ZM2209.38 1132.43H2210.5V1320H2209.38ZM2210.5 1211.79H2211.62V1320H2210.5ZM2211.62 1233.43H2212.74V1320H2211.62ZM2212.74 1255.07H2213.86V1320H2212.74ZM2213.86 1233.43H2214.99V1320H2213.86ZM2214.99 1240.64H2216.11V1320H2214.99ZM2216.11 1247.86H2217.23V1320H2216.11ZM2217.23 1233.43H2218.35V1320H2217.23ZM2218.35 1255.07H2219.47V1320H2218.35ZM2219.47 1269.5H2220.59V1320H2219.47ZM2220.59 1182.93H2221.71V1320H2220.59ZM2221.71 1161.29H2222.84V1320H2221.71ZM2222.84 1226.21H2223.96V1320H2222.84ZM2223.96 1233.43H2225.08V1320H2223.96ZM2225.08 1197.36H2226.2V1320H2225.08ZM2226.2 1219H2227.32V1320H2226.2ZM2227.32 1161.29H2228.44V1320H2227.32ZM2228.44 1096.36H2229.57V1320H2228.44ZM2229.57 1053.07H2230.69V1320H2229.57ZM2230.69 973.71H2231.81V1320H2230.69ZM2231.81 1204.57H2232.93V1320H2231.81ZM2232.93 988.14H2234.05V1320H2232.93ZM2234.05 1125.21H2235.17V1320H2234.05ZM2235.17 1175.71H2236.29V1320H2235.17ZM2236.29 1132.43H2237.42V1320H2236.29ZM2237.42 1161.29H2238.54V1320H2237.42ZM2238.54 1211.79H2239.66V1320H2238.54ZM2239.66 1211.79H2240.78V1320H2239.66ZM2240.78 1255.07H2241.9V1320H2240.78ZM2241.9 1211.79H2243.02V1320H2241.9ZM2243.02 1226.21H2244.15V1320H2243.02ZM2244.15 1233.43H2245.27V1320H2244.15ZM2245.27 1204.57H2246.39V1320H2245.27ZM2246.39 1154.07H2247.51V1320H2246.39ZM2247.51 1226.21H2248.63V1320H2247.51ZM2248.63 1226.21H2249.75V1320H2248.63ZM2249.75 1233.43H2250.87V1320H2249.75ZM2250.87 1233.43H2252V1320H2250.87ZM2252 1211.79H2253.12V1320H2252ZM2253.12 1211.79H2254.24V1320H2253.12ZM2254.24 1219H2255.36V1320H2254.24ZM2255.36 1197.36H2256.48V1320H2255.36ZM2256.48 1219H2257.6V1320H2256.48ZM2257.6 1197.36H2258.73V1320H2257.6ZM2258.73 1226.21H2259.85V1320H2258.73ZM2259.85 1233.43H2260.97V1320H2259.85ZM2260.97 1132.43H2262.09V1320H2260.97ZM2262.09 1233.43H2263.21V1320H2262.09ZM2263.21 1247.86H2264.33V1320H2263.21ZM2264.33 1226.21H2265.45V1320H2264.33ZM2265.45 1255.07H2266.58V1320H2265.45ZM2266.58 1247.86H2267.7V1320H2266.58ZM2267.7 1255.07H2268.82V1320H2267.7ZM2268.82 1262.29H2269.94V1320H2268.82ZM2269.94 1197.36H2271.06V1320H2269.94ZM2271.06 1089.14H2272.18V1320H2271.06ZM2272.18 865.5H2273.31V1320H2272.18ZM2273.31 1031.43H2274.43V1320H2273.31ZM2274.43 1204.57H2275.55V1320H2274.43ZM2275.55 1247.86H2276.67V1320H2275.55ZM2276.67 1255.07H2277.79V1320H2276.67ZM2277.79 1226.21H2278.91V1320H2277.79ZM2278.91 1211.79H2280.03V1320H2278.91ZM2280.03 1219H2281.16V1320H2280.03ZM2281.16 1219H2282.28V1320H2281.16ZM2282.28 1146.86H2283.4V1320H2282.28ZM2283.4 1247.86H2284.52V1320H2283.4ZM2284.52 1240.64H2285.64V1320H2284.52ZM2285.64 1276.71H2286.76V1320H2285.64ZM2286.76 1269.5H2287.89V1320H2286.76ZM2287.89 1255.07H2289.01V1320H2287.89ZM2289.01 1262.29H2290.13V1320H2289.01ZM2290.13 1269.5H2291.25V1320H2290.13ZM2291.25 1269.5H2292.37V1320H2291.25ZM2292.37 1096.36H2293.49V1320H2292.37ZM2293.49 1110.79H2294.61V1320H2293.49ZM2294.61 1204.57H2295.74V1320H2294.61ZM2295.74 1139.64H2296.86V1320H2295.74ZM2296.86 1182.93H2297.98V1320H2296.86ZM2297.98 1211.79H2299.1V1320H2297.98ZM2299.1 1233.43H2300.22V1320H2299.1ZM2300.22 1255.07H2301.34V1320H2300.22ZM2301.34 1247.86H2302.46V1320H2301.34ZM2302.46 1269.5H2303.59V1320H2302.46ZM2303.59 1204.57H2304.71V1320H2303.59ZM2304.71 1226.21H2305.83V1320H2304.71ZM2305.83 1247.86H2306.95V1320H2305.83ZM2306.95 1233.43H2308.07V1320H2306.95ZM2308.07 1247.86H2309.19V1320H2308.07ZM2309.19 1247.86H2310.32V1320H2309.19ZM2310.32 1269.5H2311.44V1320H2310.32ZM2311.44 1247.86H2312.56V1320H2311.44ZM2312.56 1240.64H2313.68V1320H2312.56ZM2313.68 1219H2314.8V1320H2313.68ZM2314.8 1247.86H2315.92V1320H2314.8ZM2315.92 1262.29H2317.04V1320H2315.92ZM2317.04 1262.29H2318.17V1320H2317.04ZM2318.17 1226.21H2319.29V1320H2318.17ZM2319.29 1226.21H2320.41V1320H2319.29ZM2320.41 1240.64H2321.53V1320H2320.41Z" fill="#23916f"/>
<path d="M155 815V1321" stroke="#6e6e6e" stroke-width="1.8" fill="none"/>
<path d="M155 1321.5H2416.3" stroke="#2e2e2e" stroke-width="1.2" fill="none"/>
<text transform="translate(132.8 1327.48) scale(1.18 1)" font-size="19.4" fill="#333" text-anchor="end">0</text>
<text transform="translate(132.8 1255.48) scale(1.18 1)" font-size="19.4" fill="#333" text-anchor="end">10</text>
<text transform="translate(132.8 1183.48) scale(1.18 1)" font-size="19.4" fill="#333" text-anchor="end">20</text>
<text transform="translate(132.8 1111.48) scale(1.18 1)" font-size="19.4" fill="#333" text-anchor="end">30</text>
<text transform="translate(132.8 1038.48) scale(1.18 1)" font-size="19.4" fill="#333" text-anchor="end">40</text>
<text transform="translate(132.8 966.48) scale(1.18 1)" font-size="19.4" fill="#333" text-anchor="end">50</text>
<text transform="translate(132.8 894.48) scale(1.18 1)" font-size="19.4" fill="#333" text-anchor="end">60</text>
<text transform="translate(132.8 822.48) scale(1.18 1)" font-size="19.4" fill="#333" text-anchor="end">70</text>
<path d="M144 1320.5H155M144 1248.5H155M144 1176.5H155M144 1104.5H155M144 1031.5H155M144 959.5H155M144 887.5H155M144 815.5H155" stroke="#a8a8a8" stroke-width="1" fill="none"/>
<text transform="translate(156.1 1356.5) scale(1.11 1)" font-size="21" fill="#111" text-anchor="middle">mar. 07</text>
<text transform="translate(479.1 1356.5) scale(1.11 1)" font-size="21" fill="#111" text-anchor="middle">mer. 08</text>
<text transform="translate(802.1 1356.5) scale(1.11 1)" font-size="21" fill="#111" text-anchor="middle">jeu. 09</text>
<text transform="translate(1125.1 1356.5) scale(1.11 1)" font-size="21" fill="#111" text-anchor="middle">ven. 10</text>
<text transform="translate(1448.1 1356.5) scale(1.11 1)" font-size="21" fill="#111" text-anchor="middle">sam. 11</text>
<text transform="translate(1771.1 1356.5) scale(1.11 1)" font-size="21" fill="#111" text-anchor="middle">dim. 12</text>
<text transform="translate(2094.1 1356.5) scale(1.11 1)" font-size="21" fill="#111" text-anchor="middle">lun. 13</text>
<path d="M156.5 1322V1332M479.5 1322V1332M802.5 1322V1332M1125.5 1322V1332M1448.5 1322V1332M1771.5 1322V1332M2094.5 1322V1332" stroke="#aaa" stroke-width="1.2" fill="none"/>
<text transform="translate(85 1068) rotate(-90)" font-size="22" fill="#333" text-anchor="middle">kW</text>
<path d="M1990 68H2406V90Q2406 98 2398 98H1998Q1990 98 1990 90Z" fill="#fff"/>
<text x="2198.5" y="89.5" font-size="26" font-weight="bold" fill="#000" text-anchor="middle">LHB-site-L516</text>
<rect x="1991.5" y="107.5" width="412" height="58" rx="10" ry="10" fill="#fff" stroke="#7f7f7f" stroke-width="3.5"/>
<text x="2208.25" y="147.5" font-size="27" fill="#000" text-anchor="middle" letter-spacing="0.5" xml:space="preserve">Consommation: 208 kWh</text>
<rect x="1991.5" y="177.5" width="412" height="58" rx="10" ry="10" fill="#fff" stroke="#7f7f7f" stroke-width="3.5"/>
<text x="2207.3" y="217.5" font-size="27" fill="#000" text-anchor="middle" letter-spacing="0.6" xml:space="preserve">P Max :  63 kW</text>
<rect x="1991.5" y="247.5" width="412" height="58" rx="10" ry="10" fill="#fff" stroke="#7f7f7f" stroke-width="3.5"/>
<text x="2207.9" y="287.5" font-size="27" fill="#000" text-anchor="middle" letter-spacing="0.8" xml:space="preserve">P min : 1 kW</text>
<rect x="562" y="806" width="412" height="58" rx="10" ry="10" fill="#fff" stroke="#7f7f7f" stroke-width="3.5"/>
<text x="777.5" y="846.5" font-size="28" fill="#000" text-anchor="middle" letter-spacing="0" xml:space="preserve">Consommation: 1 244 kWh</text>
<rect x="1100" y="806" width="412" height="58" rx="10" ry="10" fill="#fff" stroke="#7f7f7f" stroke-width="3.5"/>
<text x="1315.62" y="846.5" font-size="28" fill="#000" text-anchor="middle" letter-spacing="0.25" xml:space="preserve">P Max :  68 kW</text>
<rect x="1610" y="806" width="412" height="58" rx="10" ry="10" fill="#fff" stroke="#7f7f7f" stroke-width="3.5"/>
<text x="1825.17" y="846.5" font-size="28" fill="#000" text-anchor="middle" letter-spacing="0.35" xml:space="preserve">P min : 0 kW</text>
<rect x="176.5" y="49" width="481.5" height="78" fill="#0b0b1b"/>
<linearGradient id="ecog" gradientUnits="userSpaceOnUse" x1="0" y1="72" x2="0" y2="112"><stop offset="0" stop-color="#00f3c8"/><stop offset="0.5" stop-color="#00eec4"/><stop offset="0.6" stop-color="#03a58a"/><stop offset="1" stop-color="#00c7a4"/></linearGradient>
<g fill="none" stroke-linecap="round" stroke-linejoin="round">
<path d="M191.8 92.2H211.5A9.9 12.4 0 1 0 208.8 103.6" stroke="url(#ecog)" stroke-width="6.8"/>
<path d="M198.4 73.8L204.8 71.2" stroke="#00f0c6" stroke-width="6.2"/>
<path d="M237.4 86.2A9.9 12.4 0 1 0 237.4 103.0" stroke="url(#ecog)" stroke-width="6.8"/>
<ellipse cx="257.2" cy="94.6" rx="10.1" ry="12.4" stroke="url(#ecog)" stroke-width="6.8"/>
<path d="M274.8 86.4L283.6 107.6L291.6 81.6L299.4 107.6L313.6 67.8" stroke="#fff" stroke-width="6.4"/>
<path d="M315.8 86.4Q325.5 76.2 335.0 85.4V107.6" stroke="#fff" stroke-width="6.4"/>
<ellipse cx="323.8" cy="100.4" rx="8.4" ry="6.4" stroke="#fff" stroke-width="6.2"/>
<path d="M346.4 75.6V101.5Q346.4 107.6 352.6 107.6M361.8 75.6V101.5Q361.8 107.6 368 107.6M341.8 81.4H371.2" stroke="#fff" stroke-width="6.4"/>
</g>
<ellipse cx="434" cy="89" rx="25.5" ry="27" fill="#00b2e3"/>
<text x="434" y="96" font-size="21" fill="#fff" text-anchor="middle" letter-spacing="-1">Rte</text>
<text transform="translate(468 79.5) scale(0.9 1)" font-size="11.4" font-weight="bold" fill="#0099d0">Le réseau</text>
<text transform="translate(468 91.5) scale(0.9 1)" font-size="11.4" font-weight="bold" fill="#0099d0">de transport</text>
<text transform="translate(468 103.5) scale(0.9 1)" font-size="11.4" font-weight="bold" fill="#0099d0">d’électricité</text>
<rect x="546" y="61" width="101" height="56" fill="#fff"/>
<rect x="553.4" y="69" width="6.6" height="6.6" fill="#2a3d8f"/><rect x="564" y="69" width="7.6" height="6.6" fill="#e1000f"/>
<text transform="translate(552.8 84.6) scale(0.86 1)" font-size="7.4" font-weight="bold" fill="#2b2b2b">RÉPUBLIQUE</text>
<text transform="translate(552.8 92.6) scale(0.86 1)" font-size="7.4" font-weight="bold" fill="#2b2b2b">FRANÇAISE</text>
<path d="M553 99.5h8M553 104h8M553 108.5h10" stroke="#b0b0b0" stroke-width="0.9" fill="none"/>
<rect x="607.5" y="66.8" width="34" height="44.6" fill="none" stroke="#4a78c4" stroke-width="1.3"/>
<text x="624.2" y="75.3" font-size="6" font-weight="bold" fill="#e2001a" text-anchor="middle" letter-spacing="1">ADEME</text>
<circle cx="624" cy="86.8" r="8.5" fill="#2f5fb3"/>
<path d="M619 82q3 -2 6 0q-2 3 1 5q-3 2 -5 5q-2 -4 -2 -10z" fill="#7f9fd8" opacity="0.8"/>
<path d="M612 100h24M612 103.8h24M612 107.6h24" stroke="#ee7b82" stroke-width="1.1" fill="none"/>
<rect x="170.5" y="137" width="489" height="120.5" fill="none" stroke="#dadada" stroke-width="4"/>
<rect x="290" y="137" width="4" height="120" fill="#dadada"/>
<rect x="412" y="137" width="4" height="120" fill="#dadada"/>
<rect x="534" y="137" width="4" height="120" fill="#dadada"/>
<rect x="170" y="189" width="490" height="5" fill="#dadada"/>
<text transform="translate(231.1 175) scale(1.25 1)" font-size="34" fill="#000" text-anchor="middle">J</text>
<text transform="translate(321.5 175) scale(1.25 1)" font-size="34" fill="#000" text-anchor="middle">J</text>
<text transform="translate(443.2 175) scale(1.25 1)" font-size="34" fill="#000" text-anchor="middle">J</text>
<text transform="translate(564.7 175) scale(1.25 1)" font-size="34" fill="#000" text-anchor="middle">J</text>
<text transform="translate(353.4 175) scale(0.95 1)" font-size="34" fill="#000" text-anchor="middle">+</text>
<text transform="translate(475.4 175) scale(0.95 1)" font-size="34" fill="#000" text-anchor="middle">+</text>
<text transform="translate(598.2 175) scale(0.95 1)" font-size="34" fill="#000" text-anchor="middle">+</text>
<path d="M381.4 158.6L387.6 152.2V174.8" fill="none" stroke="#000" stroke-width="3.4" stroke-linejoin="round"/>
<text transform="translate(508.7 175) scale(0.95 1)" font-size="34" fill="#000" text-anchor="middle" font-weight="bold">2</text>
<text transform="translate(630.7 175) scale(0.95 1)" font-size="34" fill="#000" text-anchor="middle" font-weight="bold">3</text>
<g transform="translate(180 195)">
<rect width="106" height="55" fill="url(#tealg)"/>
<path d="M28.62 0Q65.72 19.8 106 3.85V0Z" fill="#03a48b"/>
<path d="M14.84 0Q63.6 44 106 17.6V3.85Q65.72 19.8 28.62 0Z" fill="#00f0c8"/>
</g>
<g transform="translate(302 196)">
<rect width="106" height="56" fill="url(#tealg)"/>
<path d="M28.62 0Q65.72 20.16 106 3.92V0Z" fill="#03a48b"/>
<path d="M14.84 0Q63.6 44.8 106 17.92V3.92Q65.72 20.16 28.62 0Z" fill="#00f0c8"/>
</g>
<g transform="translate(424 196)">
<rect width="106" height="56" fill="url(#tealg)"/>
<path d="M28.62 0Q65.72 20.16 106 3.92V0Z" fill="#03a48b"/>
<path d="M14.84 0Q63.6 44.8 106 17.92V3.92Q65.72 20.16 28.62 0Z" fill="#00f0c8"/>
</g>
<g transform="translate(544 196)">
<rect width="106" height="56" fill="url(#tealg)"/>
<path d="M28.62 0Q65.72 20.16 106 3.92V0Z" fill="#03a48b"/>
<path d="M14.84 0Q63.6 44.8 106 17.92V3.92Q65.72 20.16 28.62 0Z" fill="#00f0c8"/>
</g>
<rect x="2322" y="1322" width="115" height="57" fill="#fff"/>
<path d="M2361.2 1343.8 A12.6 12.6 0 1 0 2361.9 1350.4" fill="none" stroke="#0b6fb8" stroke-width="5.2" stroke-linecap="round"/>
<path d="M2349.5 1350.6 H2362.5" fill="none" stroke="#0b6fb8" stroke-width="4.8" stroke-linecap="round"/>
<path d="M2370.6 1350.2 A6.8 6.8 0 1 1 2382.6 1348.8 L2371 1361 H2385.6" fill="none" stroke="#0b6fb8" stroke-width="5.2" stroke-linejoin="round"/>
<path d="M2391.9 1324.5 L2383.6 1338.4 L2393.2 1340.8 L2389.3 1363.2 L2399.8 1338.6 L2391.2 1335.8 Z" fill="#e85a26"/>
<path d="M2404.1 1338.9H2424.4L2418.4 1344.9H2401.2Z M2399.3 1348H2418.2L2412.7 1354.2H2396.9Z M2395.5 1357H2416.8L2411.3 1363.2H2393.1Z" fill="#f39223"/>
<text x="2393.6" y="1334.8" font-size="7.6" font-weight="bold" fill="#e9653d" textLength="30" lengthAdjust="spacingAndGlyphs">FRANCE</text>
<rect x="2340" y="1365.5" width="74" height="2" fill="#8dbbe4" opacity="0.65"/>
</svg></body></html>
